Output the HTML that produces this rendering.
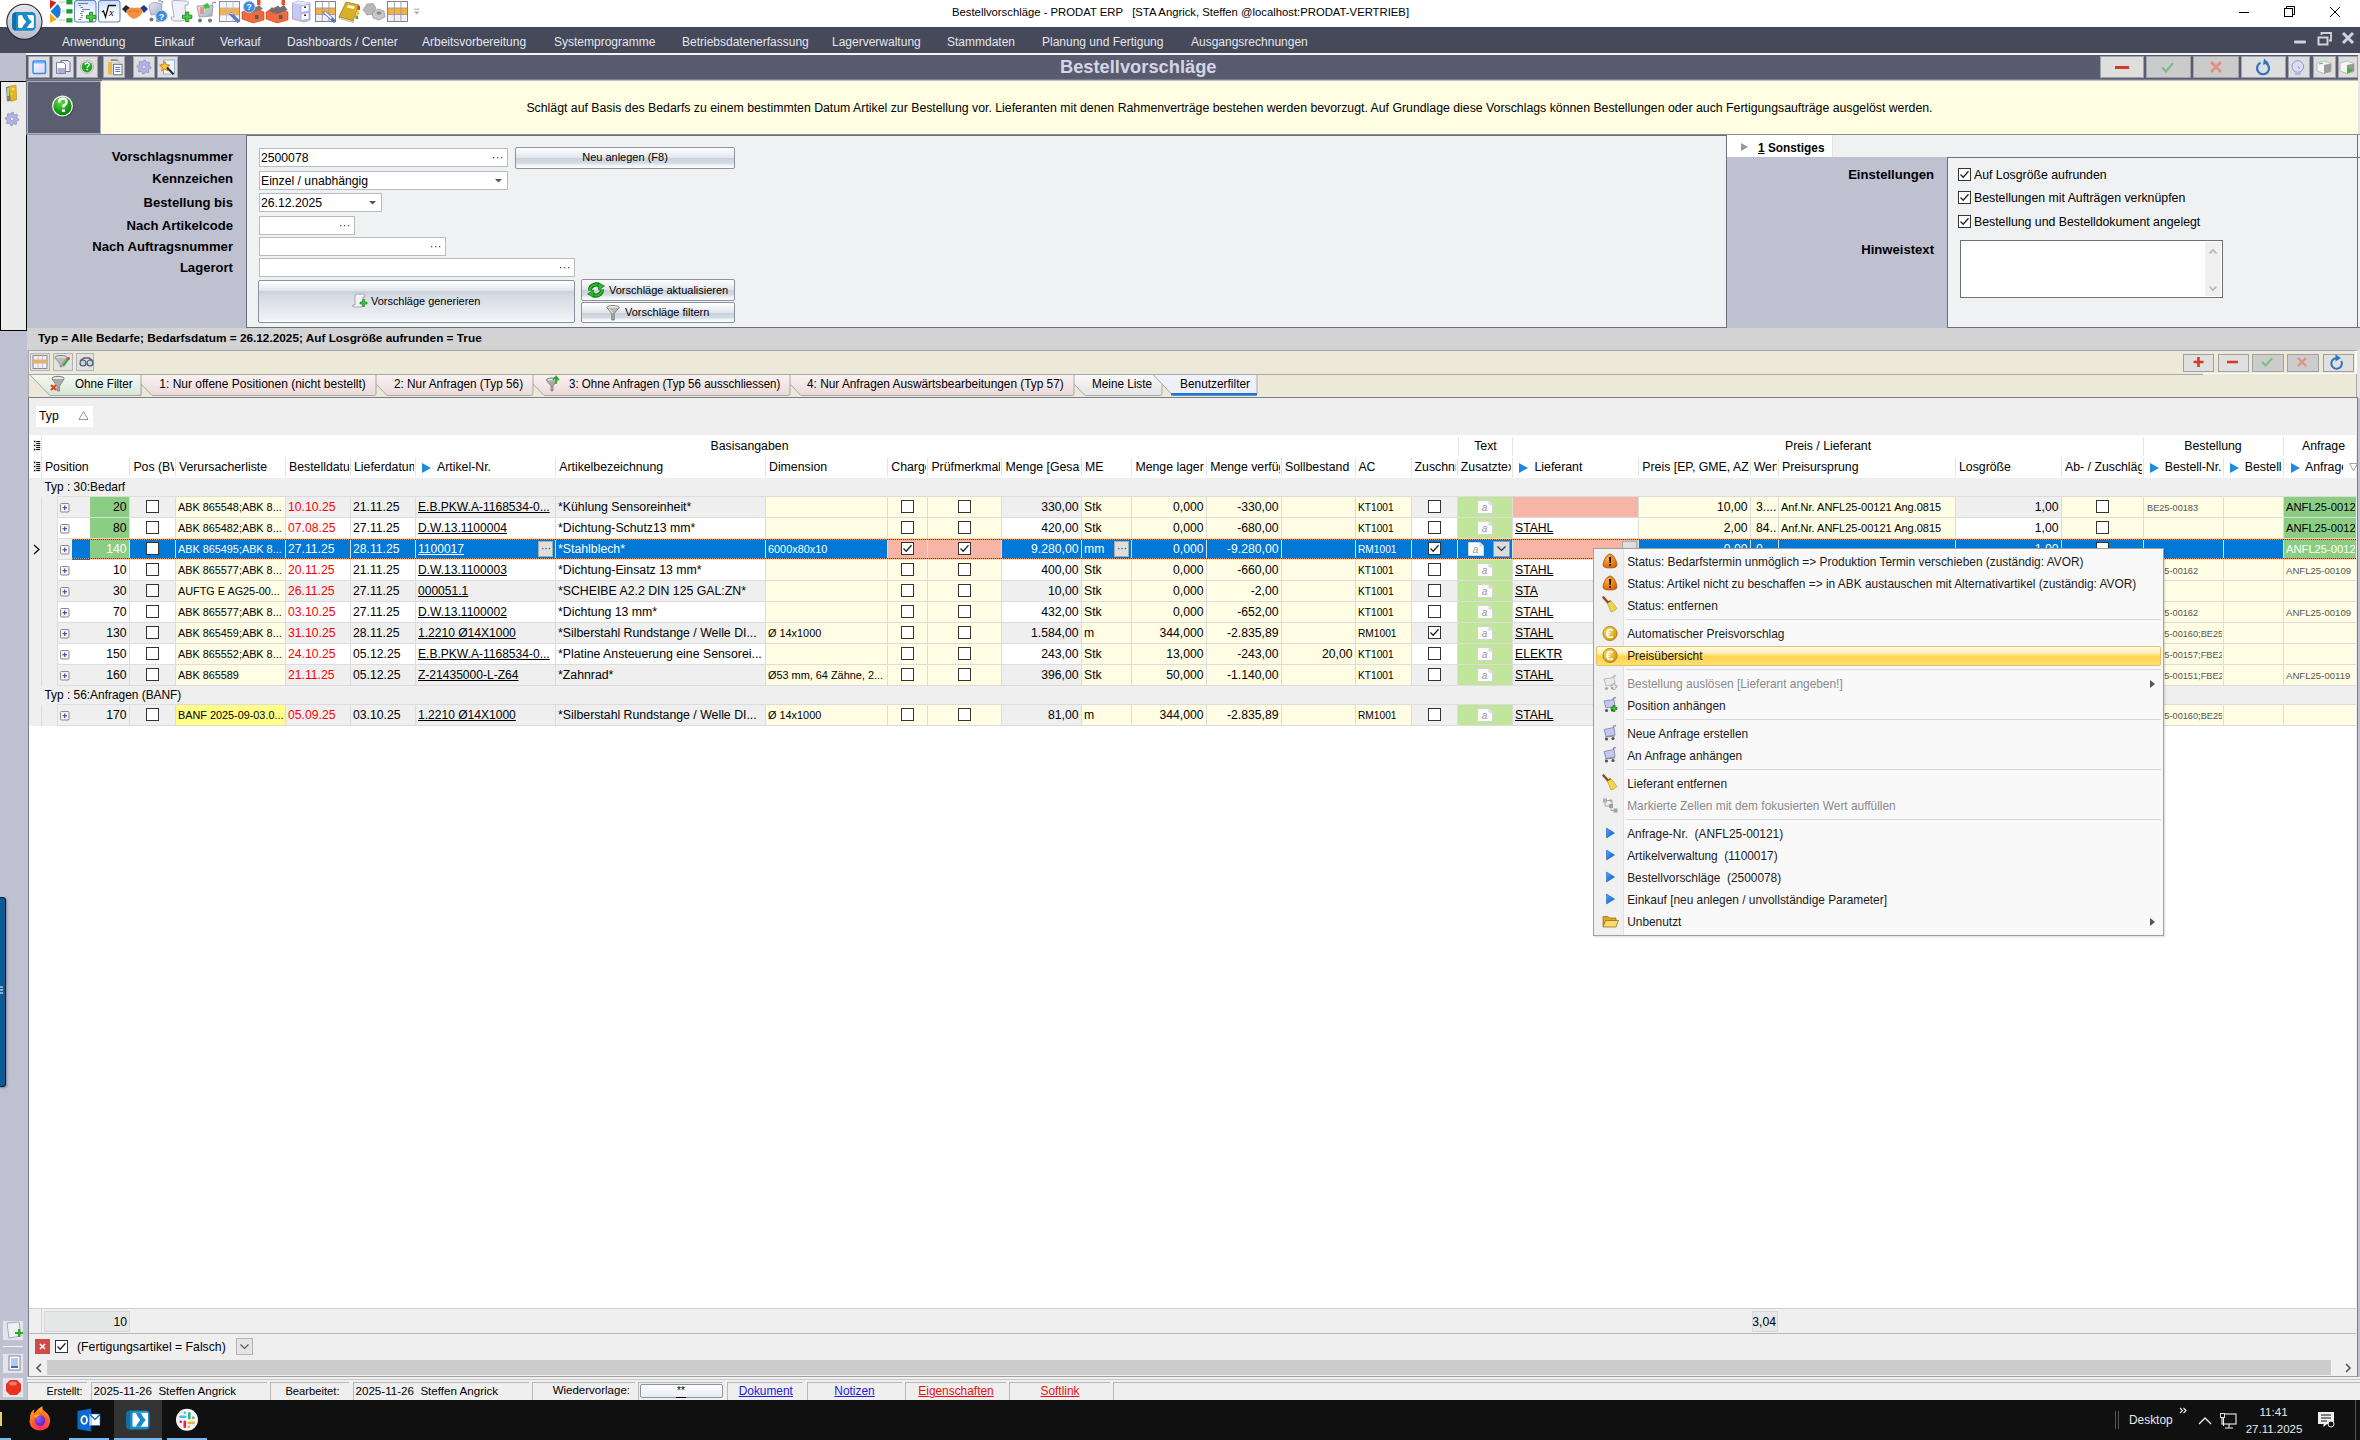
<!DOCTYPE html><html><head><meta charset="utf-8"><title>Bestellvorschläge</title><style>
*{box-sizing:border-box;margin:0;padding:0}
html,body{width:2360px;height:1440px;overflow:hidden;background:#fff;font-family:"Liberation Sans",sans-serif;font-size:12px;color:#000}
.a{position:absolute}
.t{position:absolute;white-space:nowrap;line-height:1}
.u{text-decoration:underline}
svg{position:absolute;overflow:visible}
</style></head><body>
<div class="a" style="left:0px;top:0px;width:2360px;height:27px;background:#fff"></div>
<div class="t " style="left:952.0px;top:7.2px;font-size:11.30px;">Bestellvorschläge - PRODAT ERP &nbsp;&nbsp;[STA Angrick, Steffen @localhost:PRODAT-VERTRIEB]</div>
<svg style="left:2230px;top:0" width="130" height="27"><line x1="9" y1="12.5" x2="19" y2="12.5" stroke="#000" stroke-width="1"/><rect x="54.5" y="8.5" width="8" height="8" fill="none" stroke="#000"/><path d="M56.5 8.5 V6.5 H64.5 V14.5 H62.5" fill="none" stroke="#000"/><path d="M100 7 L110 17 M110 7 L100 17" stroke="#000" stroke-width="1"/></svg>
<div class="a" style="left:0px;top:27px;width:2360px;height:26px;background:#464959"></div>
<div class="t " style="left:62.0px;top:35.8px;font-size:12.00px;color:#e4e7ee;">Anwendung</div>
<div class="t " style="left:154.0px;top:35.8px;font-size:12.00px;color:#e4e7ee;">Einkauf</div>
<div class="t " style="left:220.0px;top:35.8px;font-size:12.00px;color:#e4e7ee;">Verkauf</div>
<div class="t " style="left:287.0px;top:35.8px;font-size:12.00px;color:#e4e7ee;">Dashboards / Center</div>
<div class="t " style="left:422.0px;top:35.8px;font-size:12.00px;color:#e4e7ee;">Arbeitsvorbereitung</div>
<div class="t " style="left:554.0px;top:35.8px;font-size:12.00px;color:#e4e7ee;">Systemprogramme</div>
<div class="t " style="left:682.0px;top:35.8px;font-size:12.00px;color:#e4e7ee;">Betriebsdatenerfassung</div>
<div class="t " style="left:832.0px;top:35.8px;font-size:12.00px;color:#e4e7ee;">Lagerverwaltung</div>
<div class="t " style="left:947.0px;top:35.8px;font-size:12.00px;color:#e4e7ee;">Stammdaten</div>
<div class="t " style="left:1042.0px;top:35.8px;font-size:12.00px;color:#e4e7ee;">Planung und Fertigung</div>
<div class="t " style="left:1191.0px;top:35.8px;font-size:12.00px;color:#e4e7ee;">Ausgangsrechnungen</div>
<svg style="left:2290px;top:30px" width="70" height="22"><rect x="4" y="10.5" width="12" height="3" rx="1" fill="#d0d2dc"/><rect x="28.5" y="7.5" width="9" height="7" fill="none" stroke="#d0d2dc" stroke-width="2"/><path d="M31.5 5 V3 H41 V10.5 H39" fill="none" stroke="#d0d2dc" stroke-width="1.8"/><path d="M53 3 L63 13 M63 3 L53 13" stroke="#d0d2dc" stroke-width="3"/></svg>
<svg style="left:0;top:0" width="50" height="44"><defs><linearGradient id="lgc" x1="0" y1="0" x2="0" y2="1"><stop offset="0" stop-color="#e4e6ee"/><stop offset="1" stop-color="#b8bac8"/></linearGradient></defs><circle cx="24.4" cy="21.8" r="17.6" fill="url(#lgc)" stroke="#2a2c34" stroke-width="1.1"/><rect x="12.2" y="12" width="23.6" height="18.7" rx="4.2" fill="#1a8ac8"/><path d="M16 12.5 Q12.2 12.5 12.2 16.5 V26.5 Q12.2 30.5 16 30.5 Z" fill="#0e6ea8"/><rect x="18.1" y="14.9" width="15.8" height="13.2" rx="1.5" fill="#fff"/><path d="M21.8 14.9 L27.1 14.9 Q28.5 19 31.9 21.7 Q28.5 24.5 26.8 28.1 L21.9 28.1 Q23.5 24.5 26.3 21.7 Q23.5 19 21.8 14.9 Z" fill="#1a8ac8"/></svg>
<div class="a" style="left:0px;top:53px;width:26px;height:27px;background:#bfc0cf"></div>
<div class="a" style="left:26px;top:53px;width:2334px;height:2px;background:#f4f4f6"></div>
<div class="a" style="left:26px;top:55px;width:2334px;height:25px;background:#595c6e"></div>
<div class="a" style="left:26px;top:79px;width:2334px;height:0.6px;background:#7c7e8c"></div>
<div class="a" style="left:26px;top:79.6px;width:2334px;height:1.4px;background:#ffffff"></div>
<div class="a" style="left:28px;top:56px;width:22px;height:22px;background:#dedede;border:1px solid #9fa1ad"></div>
<div class="a" style="left:52px;top:56px;width:22px;height:22px;background:#dedede;border:1px solid #9fa1ad"></div>
<div class="a" style="left:76px;top:56px;width:22px;height:22px;background:#dedede;border:1px solid #9fa1ad"></div>
<div class="a" style="left:103px;top:56px;width:22px;height:22px;background:#dedede;border:1px solid #9fa1ad"></div>
<div class="a" style="left:133px;top:56px;width:22px;height:22px;background:#dedede;border:1px solid #9fa1ad"></div>
<div class="a" style="left:157px;top:56px;width:21px;height:22px;background:#dedede;border:1px solid #9fa1ad"></div>
<div class="t " style="left:1060.0px;top:57.5px;font-size:18.30px;color:#d4d6e6;font-weight:bold;">Bestellvorschläge</div>
<div class="a" style="left:2100px;top:56px;width:44px;height:22px;background:#dedede;border:1px solid #9fa1ad"></div>
<div class="a" style="left:2146px;top:56px;width:45px;height:22px;background:#cbcbcb;border:1px solid #9fa1ad"></div>
<div class="a" style="left:2193px;top:56px;width:46px;height:22px;background:#cbcbcb;border:1px solid #9fa1ad"></div>
<div class="a" style="left:2241px;top:56px;width:45px;height:22px;background:#dedede;border:1px solid #9fa1ad"></div>
<div class="a" style="left:2288px;top:56px;width:22px;height:22px;background:#dedede;border:1px solid #9fa1ad"></div>
<div class="a" style="left:2313px;top:56px;width:23px;height:22px;background:#dedede;border:1px solid #9fa1ad"></div>
<div class="a" style="left:2338px;top:56px;width:20px;height:22px;background:#dedede;border:1px solid #9fa1ad"></div>
<svg style="left:2100px;top:56px" width="260" height="22"><rect x="15" y="10" width="14" height="3" fill="#d83a2a"/><path d="M62 11.5 L66 15.5 L73 7" fill="none" stroke="#7fbf8a" stroke-width="2.4"/><path d="M111 6 L121 16 M121 6 L111 16" stroke="#e2907f" stroke-width="2.6"/><path d="M160.5 6.8 A6 6 0 1 0 166 7" fill="none" stroke="#2f73bf" stroke-width="2.2"/><path d="M164 2.5 L169 7.2 L163 8.8 Z" fill="#2f73bf"/><circle cx="197.8" cy="10.5" r="5.8" fill="#dcdcf6" stroke="#9090d0" stroke-width="1"/><path d="M197.8 10.5 L199.5 12" stroke="#5050a0" stroke-width="0.8"/><ellipse cx="198" cy="17.5" rx="3.5" ry="1.5" fill="#b8b8e8"/><path d="M217 7 L224 5 L231 7.5 L231 15.5 L224 17.5 L217 15 Z" fill="#f6f6f2" stroke="#aaa" stroke-width="0.7"/><path d="M224 9 L231 7.5 L231 15.5 L224 17.5 Z" fill="#9a9a9a"/><path d="M219 8 L223 7" stroke="#4ac04a" stroke-width="1"/><path d="M240 7 L247 5 L254 7.5 L254 15.5 L247 17.5 L240 15 Z" fill="#f6f6f2" stroke="#aaa" stroke-width="0.7"/><path d="M247 9 L254 7.5 L254 15.5 L247 17.5 Z" fill="#9a9a9a"/><path d="M247 11 L253 14 L247 18 Z" fill="#3cb83c"/></svg>
<svg style="left:28px;top:56px" width="152" height="22"><defs><linearGradient id="wg" x1="0" y1="0" x2="1" y2="1"><stop offset="0" stop-color="#ffffff"/><stop offset="1" stop-color="#d8ccf4"/></linearGradient></defs><rect x="5" y="5" width="12.5" height="12.5" rx="1.2" fill="url(#wg)" stroke="#2a90ff" stroke-width="1.5"/><path d="M5.5 6.8 H17" stroke="#2a90ff" stroke-width="0.9"/><path d="M33 4.5 H40 L42 6.5 V15.5 H33 Z" fill="#f0eef8" stroke="#7050b0" stroke-width="0.9"/><path d="M28.5 6.5 H35.5 L37.5 8.5 V17.5 H28.5 Z" fill="#fff" stroke="#6878a0" stroke-width="0.9"/><rect x="29.5" y="12" width="7.5" height="5" fill="#a8b4d0"/><circle cx="59" cy="11" r="6.6" fill="#ece4f0" stroke="#a890b0" stroke-width="0.6"/><circle cx="59" cy="11" r="5.4" fill="#1ea81e"/><path d="M57 8.8 Q57 7 59 7 Q61.2 7 61.2 8.8 Q61.2 10 59.3 10.8 V11.8" fill="none" stroke="#fff" stroke-width="1.4"/><rect x="58.4" y="12.8" width="1.8" height="1.4" fill="#fff"/><rect x="80" y="6" width="4" height="12.5" fill="#f0b848"/><path d="M82.6 4.2 H89.9" stroke="#888" stroke-width="1.6"/><rect x="84.5" y="3" width="3.5" height="1.8" fill="#999"/><rect x="90.5" y="5" width="1" height="2" fill="#f0b848"/><rect x="85.5" y="8.3" width="8.5" height="10.5" fill="#fff" stroke="#707070" stroke-width="1"/><path d="M87.3 11.5 H92.2 M87.3 13.5 H92.2 M87.3 15.5 H92.2" stroke="#3a70c0" stroke-width="0.9"/><polygon points="123.00,11.00 122.87,12.37 120.90,13.03 120.41,13.94 120.95,15.95 119.89,16.82 118.03,15.90 117.03,16.20 116.00,18.00 114.63,17.87 113.97,15.90 113.06,15.41 111.05,15.95 110.18,14.89 111.10,13.03 110.80,12.03 109.00,11.00 109.13,9.63 111.10,8.97 111.59,8.06 111.05,6.05 112.11,5.18 113.97,6.10 114.97,5.80 116.00,4.00 117.37,4.13 118.03,6.10 118.94,6.59 120.95,6.05 121.82,7.11 120.90,8.97 121.20,9.97" fill="#b4b4e4" stroke="#7a7ab8" stroke-width="0.6"/><circle cx="116" cy="11" r="2" fill="#dcdcf0" stroke="#7a7ab8" stroke-width="0.5"/><rect x="135.5" y="4" width="11" height="14" fill="#f4f8ff" stroke="#90a8d8" stroke-width="0.9"/><path d="M136.8 5.5 L138.4 8.6 L141.8 9.1 L139.3 11.4 L139.9 14.8 L136.8 13.2 L133.7 14.8 L134.3 11.4 L131.8 9.1 L135.2 8.6 Z" fill="#f8c830" stroke="#d06010" stroke-width="0.8"/><path d="M139 11.5 L145.5 18.3" stroke="#2a2a2a" stroke-width="2"/></svg>
<svg style="left:40px;top:0" width="390" height="27"><defs><linearGradient id="qf" x1="0" y1="0" x2="0" y2="1"><stop offset="0" stop-color="#c8dcfa"/><stop offset="0.5" stop-color="#f4f8ff"/><stop offset="1" stop-color="#ffffff"/></linearGradient><linearGradient id="qc" x1="0" y1="0" x2="1" y2="1"><stop offset="0" stop-color="#e8e8f8"/><stop offset="1" stop-color="#a8a8c8"/></linearGradient></defs><path d="M10 0 L16.4 2.4 L10 9.2 Z" fill="#d42020"/><path d="M10.5 11.5 L17.5 4 Q21.5 8 20.5 11.5 Q21 15 17.5 18.5 Z" fill="#1a78d8"/><path d="M10 13.3 L16.6 19.5 L10 22.9 Z" fill="#f8a818"/><rect x="26.3" y="0" width="6.2" height="4.4" fill="#14a02e"/><rect x="26.3" y="9.2" width="6.2" height="4.3" fill="#14a02e"/><rect x="26.3" y="18.2" width="6.2" height="4.3" fill="#14a02e"/><path d="M19 2.2 H25 M22 11.2 H25 M19 20.2 H25" stroke="#c8c8c8" stroke-width="1.2"/><rect x="34.5" y="0.5" width="21.5" height="21.5" rx="2.5" fill="url(#qf)" stroke="#6a88c4" stroke-width="1.1"/><path d="M38 3.5 H48 M39 5.5 H41 M40.5 7.5 H43 M42 9.5 H50 M41 11.5 H44 M40 13.5 H42.5 M41 15.5 H43 M40.5 17.5 H42.5 M38.5 19.5 H41.5" stroke="#6a7088" stroke-width="0.9"/><polygon points="49.5,12.3 52.7,12.3 52.7,15.4 55.8,15.4 55.8,18.6 52.7,18.6 52.7,21.7 49.5,21.7 49.5,18.6 46.4,18.6 46.4,15.4 49.5,15.4" fill="#44cc44" stroke="#127a12" stroke-width="0.8"/><rect x="58.5" y="0.5" width="21.5" height="21.5" rx="2.5" fill="url(#qf)" stroke="#6a88c4" stroke-width="1.1"/><path d="M62 12 L63.5 11 L65.5 17 L68.5 5.5 H76" fill="none" stroke="#111" stroke-width="1.3"/><text x="71.5" y="16" font-size="11" font-family="Liberation Serif" font-style="italic" text-anchor="middle" fill="#111">x</text><path d="M82 9 L86 5 L90 8 L86 13 Z" fill="#282828"/><path d="M104 5 L108 9 L104 13 L100 8 Z" fill="#1c3c9c"/><path d="M86 11 Q90 6 95 8 Q100 6 103 11 Q101 17 94 19 Q88 17 86 11 Z" fill="#f49040"/><path d="M89 12 Q94 9 99 12" fill="none" stroke="#d06a20" stroke-width="0.8"/><path d="M109 6 Q112 1 118 3 L122 4 L121 14 L111 15 Z" fill="url(#qc)" stroke="#8a8aa8" stroke-width="0.7"/><path d="M118 1 Q122 0 123 3" fill="none" stroke="#888" stroke-width="1.2"/><circle cx="111.5" cy="19.5" r="2" fill="#777"/><circle cx="118" cy="20" r="2" fill="#777"/><circle cx="121.5" cy="16" r="5.8" fill="#3a8ae8" stroke="#d0d0d0" stroke-width="1"/><text x="121.5" y="19.5" font-size="9" fill="#fff" text-anchor="middle" font-family="Liberation Sans" font-weight="bold">?</text><path d="M132 3 Q131 0 135 0.5 L146 1 Q150 2 148 5 L145 5 L146 18 Q145 21 141 21 L134 21 Q130 20 131 17 L134 17 Z" fill="#eef0fa" stroke="#9a9ab4" stroke-width="0.8"/><polygon points="145.6,12.1 148.8,12.1 148.8,15.2 151.9,15.2 151.9,18.4 148.8,18.4 148.8,21.5 145.6,21.5 145.6,18.4 142.5,18.4 142.5,15.2 145.6,15.2" fill="#44cc44" stroke="#127a12" stroke-width="0.8"/><path d="M157 6 L173 5 L172 16 L159 17 Z" fill="url(#qc)" stroke="#8a8aa8" stroke-width="0.7"/><rect x="160" y="7" width="4" height="7" fill="#f08a6a" opacity="0.8"/><path d="M163 5 L168 3 L170 8 L165 9 Z" fill="#40c050"/><rect x="166" y="8" width="4" height="6" fill="#a0d8a0" opacity="0.8"/><path d="M172 4 Q174 1 176 3" fill="none" stroke="#888" stroke-width="1.2"/><circle cx="160" cy="20.5" r="2" fill="#777"/><circle cx="170" cy="20.5" r="2" fill="#777"/><rect x="179.5" y="1.5" width="20" height="20" fill="#f4f4fc" stroke="#8a8a9a"/><rect x="180" y="8" width="19" height="7" fill="#f8b040"/><path d="M186.5 1.5 V21.5 M193 1.5 V21.5 M180 8 H199 M180 15 H199" stroke="#b8b8c8" stroke-width="0.8"/><path d="M190 13 L199 22" stroke="#5a7ac8" stroke-width="3.2"/><path d="M190 13 L193 14" stroke="#e8e8f8" stroke-width="1"/><path d="M202 12 L212 7 L224 12 L224 20 L213 23 L202 19 Z" fill="#f06a40" stroke="#b84420" stroke-width="0.6"/><path d="M206 9 L209 6.5 L211 8 L214 5.5 L216 7 L219 5 L223 9 L212 13 Z" fill="#7a7a7a"/><rect x="217" y="0" width="3.5" height="5" fill="#e85030"/><rect x="215" y="15" width="3.5" height="4" fill="#505a60"/><circle cx="209.2" cy="6.9" r="5.8" fill="#3a8ae8" stroke="#c8c8d0" stroke-width="1"/><text x="209.2" y="10.2" font-size="8.5" fill="#fff" text-anchor="middle" font-family="Liberation Sans" font-weight="bold">?</text><path d="M226 12 L236 7 L248 12 L248 20 L237 23 L226 19 Z" fill="#f06a40" stroke="#b84420" stroke-width="0.6"/><path d="M228 11 L232 7 L234 9 L238 5.5 L240 7.5 L244 5 L247.5 10 L237 14 Z" fill="#6e6e6e"/><rect x="241.5" y="0" width="3.5" height="5" fill="#e85030"/><rect x="239" y="15" width="3.5" height="4" fill="#505a60"/><path d="M252.5 3 L258 1 L270 3 L270 20 L264 22 L252.5 19 Z" fill="#c8c8f0" stroke="#8888c0" stroke-width="0.6"/><path d="M252.5 3 L258 1 L270 3 L264 5 Z" fill="#e8e8fc"/><path d="M261 6 L269 4.5 L269 11 L261 12.5 Z" fill="#fafaff" stroke="#8888c0" stroke-width="0.5"/><path d="M261 14 L269 12.5 L269 19 L261 20.5 Z" fill="#fafaff" stroke="#8888c0" stroke-width="0.5"/><rect x="264" y="6.5" width="2" height="1.5" fill="#333"/><rect x="264" y="14.5" width="2" height="1.5" fill="#333"/><rect x="275.5" y="1.5" width="20" height="20" fill="#fff" stroke="#777" stroke-width="0.9"/><rect x="276" y="8" width="19" height="6.5" fill="#f8b040"/><rect x="276" y="14.5" width="19" height="6.5" fill="#eeeefc"/><path d="M282.3 1.5 V21.5 M288.9 1.5 V21.5 M276 8 H295 M276 14.5 H295" stroke="#999" stroke-width="0.9"/><path d="M285 12.5 L294 21" stroke="#5a70c0" stroke-width="3.4" stroke-linecap="round"/><path d="M285 12.5 L291 18" stroke="#f0f0f8" stroke-width="1.8" stroke-linecap="round"/><path d="M299 17 L306 2 L319 5 L313 21 Z" fill="#d8b028" stroke="#907010" stroke-width="0.7"/><path d="M299 17 L313 21 L313.5 22.5 L299.5 18.5 Z" fill="#f8f8f0" stroke="#907010" stroke-width="0.5"/><path d="M308 5 L315 6.5 L314 9 L307 7.5 Z" fill="#fff8d0"/><rect x="317.5" y="6" width="2.5" height="4" fill="#e04030"/><rect x="316.5" y="11" width="2.5" height="4" fill="#e8d030"/><rect x="315.5" y="15.5" width="2.5" height="3.5" fill="#40b040"/><path d="M323 10 L327 4 L333 3.5 L336 8 L333 14 L327 15 Z" fill="#b8b8b8" stroke="#888" stroke-width="0.6"/><path d="M332 13 L338 9 L344 11 L345 17 L339 20 L333 18 Z" fill="#c8c8c8" stroke="#888" stroke-width="0.6"/><ellipse cx="339" cy="13" rx="2.5" ry="1.5" fill="#888"/><rect x="347.5" y="1.5" width="20" height="20" fill="#fff" stroke="#777" stroke-width="0.9"/><rect x="348" y="8" width="19" height="6.5" fill="#f8b040"/><rect x="348" y="14.5" width="19" height="6.5" fill="#eeeefc"/><path d="M354.3 1.5 V21.5 M360.9 1.5 V21.5 M348 8 H367 M348 14.5 H367" stroke="#999" stroke-width="0.9"/><path d="M374 9.2 H379.5" stroke="#a8a8b8" stroke-width="1"/><path d="M374 11.5 L379.5 11.5 L376.75 14.5 Z" fill="#a8a8b8"/></svg>
<div class="a" style="left:0px;top:80px;width:2360px;height:1320px;background:#bfc0d0"></div>
<div class="a" style="left:0px;top:81px;width:27px;height:250px;background:#ececec;border:1.5px solid #000"></div>
<svg style="left:0;top:81px" width="27" height="50"><path d="M6 6 L16 4.5 L16.5 19 L7 20.5 Z" fill="#808080"/><path d="M8.5 5.5 L16 4 L16.5 18.5 L11 20.5 Z" fill="#e8b420" stroke="#b88a10" stroke-width="0.5"/><rect x="7.3" y="7" width="1.6" height="8" fill="#a8e890"/><rect x="12" y="7.5" width="2.5" height="1" fill="#fff"/><circle cx="11.8" cy="13" r="0.6" fill="#fff"/><polygon points="18.80,38.00 18.67,39.33 16.62,39.91 16.16,40.78 16.81,42.81 15.78,43.65 13.91,42.62 12.98,42.90 12.00,44.80 10.67,44.67 10.09,42.62 9.22,42.16 7.19,42.81 6.35,41.78 7.38,39.91 7.10,38.98 5.20,38.00 5.33,36.67 7.38,36.09 7.84,35.22 7.19,33.19 8.22,32.35 10.09,33.38 11.02,33.10 12.00,31.20 13.33,31.33 13.91,33.38 14.78,33.84 16.81,33.19 17.65,34.22 16.62,36.09 16.90,37.02" fill="#b4b4e4" stroke="#7a7ab8" stroke-width="0.6"/><circle cx="12" cy="38" r="1.8" fill="#ececec" stroke="#7a7ab8" stroke-width="0.5"/></svg>
<div class="a" style="left:27px;top:81px;width:74px;height:53px;background:#5b5e70;border:1px solid #aeb0bc;outline:1px solid #6b6e80"></div>
<svg style="left:27px;top:81px" width="74" height="53"><defs><radialGradient id="hg" cx="0.4" cy="0.3" r="0.8"><stop offset="0" stop-color="#6ad84a"/><stop offset="0.6" stop-color="#18a018"/><stop offset="1" stop-color="#0a700a"/></radialGradient></defs><circle cx="36.5" cy="26" r="10.5" fill="#2a2c36" opacity="0.5"/><circle cx="35.5" cy="25" r="10.5" fill="#f4f4f4"/><circle cx="35.5" cy="25" r="9.2" fill="url(#hg)"/><path d="M32 21.5 Q32 17.5 35.7 17.5 Q39.5 17.5 39.5 21 Q39.5 23.3 36.5 24.5 V26.5" fill="none" stroke="#fff" stroke-width="2.4"/><rect x="35" y="28.3" width="3" height="2.6" fill="#fff"/></svg>
<div class="a" style="left:101px;top:81px;width:2258px;height:53px;background:#fffee3"></div>
<div class="t " style="left:526.4px;top:101.6px;font-size:12.30px;">Schlägt auf Basis des Bedarfs zu einem bestimmten Datum Artikel zur Bestellung vor. Lieferanten mit denen Rahmenverträge bestehen werden bevorzugt. Auf Grundlage diese Vorschlags können Bestellungen oder auch Fertigungsaufträge ausgelöst werden.</div>
<div class="a" style="left:2358px;top:53px;width:2px;height:1347px;background:#e6e6e6"></div>
<div class="a" style="left:27px;top:134px;width:2333px;height:194px;background:#bfc0d0"></div>
<div class="a" style="left:27px;top:134px;width:2333px;height:1px;background:#8a8c98"></div>
<div class="a" style="left:246px;top:135px;width:1481px;height:193px;background:#f0f1f3;border-left:1px solid #6c6e78;border-top:1px solid #6c6e78"></div>
<div class="t" style="right:2127.0px;top:149.9px;font-size:13.10px;color:#000;font-weight:bold;">Vorschlagsnummer</div>
<div class="t" style="right:2127.0px;top:171.9px;font-size:13.10px;color:#000;font-weight:bold;">Kennzeichen</div>
<div class="t" style="right:2127.0px;top:195.9px;font-size:13.10px;color:#000;font-weight:bold;">Bestellung bis</div>
<div class="t" style="right:2127.0px;top:218.9px;font-size:13.10px;color:#000;font-weight:bold;">Nach Artikelcode</div>
<div class="t" style="right:2127.0px;top:239.9px;font-size:13.10px;color:#000;font-weight:bold;">Nach Auftragsnummer</div>
<div class="t" style="right:2127.0px;top:260.9px;font-size:13.10px;color:#000;font-weight:bold;">Lagerort</div>
<div class="a" style="left:259px;top:148px;width:249px;height:19px;background:#fff;border:1px solid #b9bbc2"></div>
<div class="t " style="left:261.0px;top:151.7px;font-size:12.20px;">2500078</div>
<svg style="left:493px;top:157px" width="12" height="4"><rect x="0" y="0" width="1.3" height="1.3" fill="#555"/><rect x="4" y="0" width="1.3" height="1.3" fill="#555"/><rect x="8" y="0" width="1.3" height="1.3" fill="#555"/></svg>
<div class="a" style="left:259px;top:171px;width:249px;height:19px;background:#fff;border:1px solid #b9bbc2"></div>
<div class="t " style="left:261.0px;top:174.7px;font-size:12.20px;">Einzel / unabhängig</div>
<svg style="left:495px;top:179px" width="8" height="5"><path d="M0 0 H7 L3.5 3.5 Z" fill="#555"/></svg>
<div class="a" style="left:259px;top:193px;width:123px;height:19px;background:#fff;border:1px solid #b9bbc2"></div>
<div class="t " style="left:261.0px;top:196.7px;font-size:12.20px;">26.12.2025</div>
<svg style="left:369px;top:201px" width="8" height="5"><path d="M0 0 H7 L3.5 3.5 Z" fill="#555"/></svg>
<div class="a" style="left:259px;top:216px;width:96px;height:19px;background:#fff;border:1px solid #b9bbc2"></div>
<svg style="left:340px;top:225px" width="12" height="4"><rect x="0" y="0" width="1.3" height="1.3" fill="#555"/><rect x="4" y="0" width="1.3" height="1.3" fill="#555"/><rect x="8" y="0" width="1.3" height="1.3" fill="#555"/></svg>
<div class="a" style="left:259px;top:237px;width:187px;height:19px;background:#fff;border:1px solid #b9bbc2"></div>
<svg style="left:431px;top:246px" width="12" height="4"><rect x="0" y="0" width="1.3" height="1.3" fill="#555"/><rect x="4" y="0" width="1.3" height="1.3" fill="#555"/><rect x="8" y="0" width="1.3" height="1.3" fill="#555"/></svg>
<div class="a" style="left:259px;top:258px;width:316px;height:19px;background:#fff;border:1px solid #b9bbc2"></div>
<svg style="left:560px;top:267px" width="12" height="4"><rect x="0" y="0" width="1.3" height="1.3" fill="#555"/><rect x="4" y="0" width="1.3" height="1.3" fill="#555"/><rect x="8" y="0" width="1.3" height="1.3" fill="#555"/></svg>
<div class="a" style="left:515px;top:147px;width:220px;height:22px;border:1px solid #8a929e;border-radius:2px;background:linear-gradient(#fefefe 0px,#f0f2f6 5px,#e2e6ec 9.5px,#c9d1db 10.5px,#d6dce4 15px,#eef1f4 calc(100% - 3px),#ffffff 100%)"></div>
<div class="t" style="left:625.0px;top:151.7px;width:0;font-size:11.00px;display:flex;justify-content:center;"><span>Neu anlegen (F8)</span></div>
<div class="a" style="left:258px;top:280px;width:317px;height:43px;border:1px solid #8a929e;border-radius:2px;background:linear-gradient(#fefefe 0px,#f0f2f6 5px,#e2e6ec 9.5px,#c9d1db 10.5px,#d6dce4 15px,#eef1f4 calc(100% - 3px),#ffffff 100%)"></div>
<div class="t " style="left:371.0px;top:295.7px;font-size:10.95px;">Vorschläge generieren</div>
<svg style="left:351px;top:293px" width="18" height="18"><path d="M4 3 Q4 1 6 1 L12 1 Q14 1 14 3 L14 4 L12 4 L12 12 Q12 14 10 14 L3 14 Q1 14 1.5 12 L4 12 Z" fill="#f0f2f8" stroke="#8a8aa0" stroke-width="0.7"/><path d="M9 9 H11.5 V6.5 H13.5 V9 H16 V11 H13.5 V13.5 H11.5 V11 H9 Z" fill="#3cc83c" stroke="#127a12" stroke-width="0.6"/></svg>
<div class="a" style="left:581px;top:279px;width:154px;height:22px;border:1px solid #8a929e;border-radius:2px;background:linear-gradient(#fefefe 0px,#f0f2f6 5px,#e2e6ec 9.5px,#c9d1db 10.5px,#d6dce4 15px,#eef1f4 calc(100% - 3px),#ffffff 100%)"></div>
<div class="t " style="left:609.0px;top:284.7px;font-size:11.00px;">Vorschläge aktualisieren</div>
<svg style="left:587px;top:281px" width="18" height="18"><path d="M3 9.5 A6 6 0 0 1 13.5 5.5" fill="none" stroke="#0a5a1a" stroke-width="4"/><path d="M15 8.5 A6 6 0 0 1 4.5 12.5" fill="none" stroke="#0a5a1a" stroke-width="4"/><path d="M3 9.5 A6 6 0 0 1 13.5 5.5" fill="none" stroke="#22c022" stroke-width="2.4"/><path d="M15 8.5 A6 6 0 0 1 4.5 12.5" fill="none" stroke="#22c022" stroke-width="2.4"/><path d="M11 1.5 L17.5 5 L11.5 9 Z" fill="#22c022" stroke="#0a5a1a" stroke-width="0.6"/><path d="M7 16.5 L0.5 13 L6.5 9 Z" fill="#22c022" stroke="#0a5a1a" stroke-width="0.6"/></svg>
<div class="a" style="left:581px;top:302px;width:154px;height:21px;border:1px solid #8a929e;border-radius:2px;background:linear-gradient(#fefefe 0px,#f0f2f6 5px,#e2e6ec 9.5px,#c9d1db 10.5px,#d6dce4 15px,#eef1f4 calc(100% - 3px),#ffffff 100%)"></div>
<div class="t " style="left:625.0px;top:306.7px;font-size:11.00px;">Vorschläge filtern</div>
<svg style="left:605px;top:304px" width="18" height="18"><ellipse cx="8" cy="3.5" rx="6" ry="2" fill="#f0f0f0" stroke="#666" stroke-width="0.8"/><path d="M2 3.8 L6.8 9.5 V16 L9.2 16 V9.5 L14 3.8" fill="#b8b8b8" stroke="#555" stroke-width="0.7"/><path d="M4 5 L7.5 9" stroke="#fff" stroke-width="0.8"/></svg>
<div class="a" style="left:1726px;top:135px;width:634px;height:193px;background:#f0f1f3;border-left:1px solid #6c6e78"></div>
<div class="a" style="left:1727px;top:135px;width:106px;height:22px;background:#ffffff;border-right:1px solid #e4e4e4"></div>
<svg style="left:1741px;top:143px" width="8" height="9"><path d="M0 0 L7 4 L0 8 Z" fill="#999"/></svg>
<div class="t " style="left:1758.0px;top:142.5px;font-size:11.85px;color:#000;font-weight:bold;"><span class="u">1</span> Sonstiges</div>
<div class="a" style="left:1727px;top:157px;width:1633px;height:171px;background:#bfc0d0"></div>
<div class="a" style="left:1947px;top:157px;width:413px;height:171px;background:#f0f1f3;border-left:1px solid #6c6e78;border-top:1px solid #6c6e78"></div>
<div class="t" style="right:426.0px;top:167.9px;font-size:13.10px;color:#000;font-weight:bold;">Einstellungen</div>
<div class="t" style="right:426.0px;top:242.9px;font-size:13.10px;color:#000;font-weight:bold;">Hinweistext</div>
<div class="a" style="left:1958px;top:168px;width:13px;height:13px;background:#fff;border:1.3px solid #333"></div>
<svg style="left:1958px;top:168px" width="13" height="13"><path d="M2.5 6.5 L5.2 9.2 L10.5 3.3" fill="none" stroke="#222" stroke-width="1.3"/></svg>
<div class="t " style="left:1974.0px;top:168.6px;font-size:12.30px;">Auf Losgröße aufrunden</div>
<div class="a" style="left:1958px;top:191px;width:13px;height:13px;background:#fff;border:1.3px solid #333"></div>
<svg style="left:1958px;top:191px" width="13" height="13"><path d="M2.5 6.5 L5.2 9.2 L10.5 3.3" fill="none" stroke="#222" stroke-width="1.3"/></svg>
<div class="t " style="left:1974.0px;top:191.6px;font-size:12.30px;">Bestellungen mit Aufträgen verknüpfen</div>
<div class="a" style="left:1958px;top:215px;width:13px;height:13px;background:#fff;border:1.3px solid #333"></div>
<svg style="left:1958px;top:215px" width="13" height="13"><path d="M2.5 6.5 L5.2 9.2 L10.5 3.3" fill="none" stroke="#222" stroke-width="1.3"/></svg>
<div class="t " style="left:1974.0px;top:215.6px;font-size:12.30px;">Bestellung und Bestelldokument angelegt</div>
<div class="a" style="left:1960px;top:240px;width:263px;height:58px;background:#fff;border:1px solid #707070"></div>
<div class="a" style="left:2205px;top:242px;width:16px;height:54px;background:#f0f0f0"></div>
<svg style="left:2205px;top:242px" width="16" height="54"><path d="M4.5 11.5 L8 8 L11.5 11.5" fill="none" stroke="#b4b4b4" stroke-width="1.6"/><path d="M4.5 44.5 L8 48 L11.5 44.5" fill="none" stroke="#b4b4b4" stroke-width="1.6"/></svg>
<div class="a" style="left:246px;top:326.5px;width:1481px;height:1.5px;background:#6c6e78"></div>
<div class="a" style="left:1947px;top:326.5px;width:1411px;height:1.5px;background:#6c6e78"></div>
<div class="a" style="left:2356.5px;top:135px;width:1.5px;height:193px;background:#6c6e78"></div>
<div class="a" style="left:27px;top:328px;width:2333px;height:22px;background:#d3d3d3"></div>
<div class="t " style="left:38.0px;top:333.2px;font-size:11.80px;color:#000;font-weight:bold;">Typ = Alle Bedarfe; Bedarfsdatum = 26.12.2025; Auf Losgröße aufrunden = True</div>
<div class="a" style="left:27px;top:350px;width:2333px;height:1050px;background:#bfc0d0"></div>
<div class="a" style="left:28px;top:350px;width:2329px;height:48px;background:#ece9d8;border-left:1px solid #a8a8a8;border-top:1px solid #a8a8a8;border-right:1px solid #a8a8a8"></div>
<div class="a" style="left:2357px;top:350px;width:3px;height:48px;background:#e4e4e4"></div>
<div class="a" style="left:28px;top:373.5px;width:2175px;height:1.2px;background:#a8a8a8"></div>
<div class="a" style="left:2203px;top:372.5px;width:153px;height:1.5px;background:#fff"></div>
<div class="a" style="left:2355px;top:351px;width:1.5px;height:23px;background:#fff"></div>
<div class="a" style="left:30px;top:353px;width:20px;height:18px;background:#e2e2e2;border:1px solid #b4b4b4"></div>
<div class="a" style="left:53px;top:353px;width:20px;height:18px;background:#e2e2e2;border:1px solid #b4b4b4"></div>
<div class="a" style="left:76px;top:353px;width:18px;height:18px;background:#e2e2e2;border:1px solid #b4b4b4"></div>
<svg style="left:30px;top:353px" width="70" height="18"><rect x="3" y="2.5" width="14" height="13" fill="#eeeefa" stroke="#889"/><rect x="3.5" y="6.5" width="13" height="4" fill="#f8b040"/><path d="M8 2.5 V15.5 M12.5 2.5 V15.5" stroke="#bbc" stroke-width="0.8"/><ellipse cx="31" cy="4.5" rx="6" ry="2" fill="#ddd" stroke="#666" stroke-width="0.8"/><path d="M25 5 L30 11 V14 L32 14 V11 L37 5" fill="#bbb" stroke="#777" stroke-width="0.6"/><path d="M33 13 L38 6" stroke="#3aa83a" stroke-width="2.2"/><circle cx="38.5" cy="5.5" r="1.4" fill="#e04040"/><circle cx="53" cy="10" r="3" fill="#b8d8f0" stroke="#555" stroke-width="1.2"/><circle cx="60" cy="10" r="3" fill="#b8d8f0" stroke="#555" stroke-width="1.2"/><path d="M50 8 L54 5 L59 5 L63 8" fill="none" stroke="#666" stroke-width="1.6"/></svg>
<div class="a" style="left:2183px;top:353.5px;width:31px;height:18px;background:#e0e0e0;border:1px solid #a0a0a0"></div>
<div class="a" style="left:2218px;top:353.5px;width:31px;height:18px;background:#e0e0e0;border:1px solid #a0a0a0"></div>
<div class="a" style="left:2252px;top:353.5px;width:32px;height:18px;background:#cccccc;border:1px solid #a0a0a0"></div>
<div class="a" style="left:2287px;top:353.5px;width:32px;height:18px;background:#cccccc;border:1px solid #a0a0a0"></div>
<div class="a" style="left:2323px;top:353.5px;width:31px;height:18px;background:#e0e0e0;border:1px solid #a0a0a0"></div>
<svg style="left:2183px;top:353px" width="175" height="18"><path d="M15.5 4 V14 M10.5 9 H20.5" stroke="#d83a2a" stroke-width="2.6"/><path d="M44 9 H55" stroke="#d83a2a" stroke-width="2.6"/><path d="M79 9 L82.5 12.5 L89 5.5" fill="none" stroke="#7fbf8a" stroke-width="2.2"/><path d="M115 5 L123 13 M123 5 L115 13" stroke="#e2907f" stroke-width="2.2"/><path d="M153 5.2 A5.3 5.3 0 1 0 158.3 8" fill="none" stroke="#2f73bf" stroke-width="2"/><path d="M152.5 1.5 L158 5 L152.5 8.5 Z" fill="#2f73bf"/></svg>
<svg style="left:30px;top:374px" width="112" height="23"><path d="M0.5 0.5 L111 0.5 L111 21.5 L21 21.5 Z" fill="url(#g)" stroke="#a4a4a4" stroke-width="1"/></svg>
<div class="t " style="left:75.0px;top:378.8px;font-size:12.00px;">Ohne Filter</div>
<svg style="left:0;top:0" width="1300" height="400"><linearGradient id="tg5" x1="0" y1="0" x2="0" y2="1"><stop offset="0" stop-color="#fafafa"/><stop offset="1" stop-color="#e4e4e4"/></linearGradient><path d="M1065.0 374.5 L1162.0 374.5 L1162.0 393.5 Q1162.0 395.5 1160.0 395.5 L1085.0 395.5 Z" fill="url(#tg5)" stroke="#a8a8a8" stroke-width="1"/><linearGradient id="tg4" x1="0" y1="0" x2="0" y2="1"><stop offset="0" stop-color="#faf2f2"/><stop offset="1" stop-color="#ecd9d9"/></linearGradient><path d="M781.0 374.5 L1074.0 374.5 L1074.0 393.5 Q1074.0 395.5 1072.0 395.5 L801.0 395.5 Z" fill="url(#tg4)" stroke="#a8a8a8" stroke-width="1"/><linearGradient id="tg3" x1="0" y1="0" x2="0" y2="1"><stop offset="0" stop-color="#faf2f2"/><stop offset="1" stop-color="#ecd9d9"/></linearGradient><path d="M524.0 374.5 L790.0 374.5 L790.0 393.5 Q790.0 395.5 788.0 395.5 L544.0 395.5 Z" fill="url(#tg3)" stroke="#a8a8a8" stroke-width="1"/><linearGradient id="tg2" x1="0" y1="0" x2="0" y2="1"><stop offset="0" stop-color="#faf2f2"/><stop offset="1" stop-color="#ecd9d9"/></linearGradient><path d="M367.0 374.5 L533.0 374.5 L533.0 393.5 Q533.0 395.5 531.0 395.5 L387.0 395.5 Z" fill="url(#tg2)" stroke="#a8a8a8" stroke-width="1"/><linearGradient id="tg1" x1="0" y1="0" x2="0" y2="1"><stop offset="0" stop-color="#faf2f2"/><stop offset="1" stop-color="#ecd9d9"/></linearGradient><path d="M132.0 374.5 L376.0 374.5 L376.0 393.5 Q376.0 395.5 374.0 395.5 L152.0 395.5 Z" fill="url(#tg1)" stroke="#a8a8a8" stroke-width="1"/><linearGradient id="tg0" x1="0" y1="0" x2="0" y2="1"><stop offset="0" stop-color="#f4faf2"/><stop offset="1" stop-color="#d8e6d6"/></linearGradient><path d="M29.7 374.5 L141.0 374.5 L141.0 393.5 Q141.0 395.5 139.0 395.5 L49.7 395.5 Z" fill="url(#tg0)" stroke="#a8a8a8" stroke-width="1"/><linearGradient id="tg6" x1="0" y1="0" x2="0" y2="1"><stop offset="0" stop-color="#f2f2fd"/><stop offset="1" stop-color="#eeeefa"/></linearGradient><path d="M1153.0 374.5 L1257.0 374.5 L1257.0 393.5 Q1257.0 395.5 1255.0 395.5 L1173.0 395.5 Z" fill="url(#tg6)" stroke="#a8a8a8" stroke-width="1"/><rect x="1171" y="393" width="86" height="2.5" fill="#1a78d6"/><ellipse cx="58" cy="378.5" rx="6" ry="2.2" fill="#e8e8e8" stroke="#555" stroke-width="0.8"/><path d="M52 379 L57 386 V391 L59.5 391 V386 L64 379" fill="#aaa" stroke="#666" stroke-width="0.6"/><path d="M51 385 L56 390 M56 385 L51 390" stroke="#e83a1a" stroke-width="2"/><ellipse cx="552" cy="380" rx="5.5" ry="2" fill="#e8e8e8" stroke="#555" stroke-width="0.8"/><path d="M546.5 380.5 L551 386 V391 L553 391 V386 L557.5 380.5" fill="#aaa" stroke="#666" stroke-width="0.6"/><path d="M556 384 V377 M553 380 L556 376.5 L559 380" fill="none" stroke="#22aa22" stroke-width="1.6"/></svg>
<div class="t" style="left:75.3px;top:378px;font-size:12px;transform:scaleX(0.9725);transform-origin:0 0">Ohne Filter</div>
<div class="t" style="left:159.3px;top:378px;font-size:12px;transform:scaleX(1.0000);transform-origin:0 0">1: Nur offene Positionen (nicht bestellt)</div>
<div class="t" style="left:393.6px;top:378px;font-size:12px;transform:scaleX(0.9825);transform-origin:0 0">2: Nur Anfragen (Typ 56)</div>
<div class="t" style="left:569.0px;top:378px;font-size:12px;transform:scaleX(0.9600);transform-origin:0 0">3: Ohne Anfragen (Typ 56 ausschliessen)</div>
<div class="t" style="left:806.8px;top:378px;font-size:12px;transform:scaleX(0.9867);transform-origin:0 0">4: Nur Anfragen Auswärtsbearbeitungen (Typ 57)</div>
<div class="t" style="left:1092.4px;top:378px;font-size:12px;transform:scaleX(0.9775);transform-origin:0 0">Meine Liste</div>
<div class="t" style="left:1180.0px;top:378px;font-size:12px;transform:scaleX(0.9900);transform-origin:0 0">Benutzerfilter</div>
<div class="a" style="left:28px;top:397px;width:2330px;height:980px;background:#efefef;border:1px solid #7a7e88"></div>
<div class="a" style="left:36px;top:406px;width:57px;height:21px;background:#fff"></div>
<div class="t " style="left:39.0px;top:410.1px;font-size:12.30px;">Typ</div>
<svg style="left:78px;top:410px" width="12" height="12"><path d="M5.5 1.5 L10 9.5 L1 9.5 Z" fill="none" stroke="#888" stroke-width="0.9"/></svg>
<div class="a" style="left:29px;top:435px;width:2327px;height:43px;background:#fff"></div>
<div class="a" style="left:41px;top:435px;width:1px;height:43px;background:#e4e4e4"></div>
<svg style="left:31px;top:435px" width="10" height="43"><rect x="2.8" y="5.7" width="1.6" height="1.6" fill="#111"/><rect x="2.8" y="9.7" width="1.6" height="1.6" fill="#111"/><rect x="2.8" y="13.7" width="1.6" height="1.6" fill="#111"/><rect x="5.2" y="6.0" width="4" height="1.1" fill="#111"/><rect x="5.2" y="8.0" width="4" height="1.1" fill="#111"/><rect x="5.2" y="10.0" width="4" height="1.1" fill="#111"/><rect x="5.2" y="12.0" width="4" height="1.1" fill="#111"/><rect x="5.2" y="14.0" width="4" height="1.1" fill="#111"/><rect x="2.8" y="26.7" width="1.6" height="1.6" fill="#111"/><rect x="2.8" y="30.7" width="1.6" height="1.6" fill="#111"/><rect x="2.8" y="34.7" width="1.6" height="1.6" fill="#111"/><rect x="5.2" y="27.0" width="4" height="1.1" fill="#111"/><rect x="5.2" y="29.0" width="4" height="1.1" fill="#111"/><rect x="5.2" y="31.0" width="4" height="1.1" fill="#111"/><rect x="5.2" y="33.0" width="4" height="1.1" fill="#111"/><rect x="5.2" y="35.0" width="4" height="1.1" fill="#111"/></svg>
<div class="t" style="left:749.5px;top:439.6px;width:0;font-size:12.30px;display:flex;justify-content:center;"><span>Basisangaben</span></div>
<div class="t" style="left:1485.5px;top:439.6px;width:0;font-size:12.30px;display:flex;justify-content:center;"><span>Text</span></div>
<div class="t" style="left:1828.0px;top:439.6px;width:0;font-size:12.30px;display:flex;justify-content:center;"><span>Preis / Lieferant</span></div>
<div class="t" style="left:2213.0px;top:439.6px;width:0;font-size:12.30px;display:flex;justify-content:center;"><span>Bestellung</span></div>
<div class="t" style="left:2323.5px;top:439.6px;width:0;font-size:12.30px;display:flex;justify-content:center;"><span>Anfrage</span></div>
<div class="a" style="left:1458px;top:437px;width:1px;height:19px;background:#e4e4e4"></div>
<div class="a" style="left:1512px;top:437px;width:1px;height:19px;background:#e4e4e4"></div>
<div class="a" style="left:2143px;top:437px;width:1px;height:19px;background:#e4e4e4"></div>
<div class="a" style="left:2283px;top:437px;width:1px;height:19px;background:#e4e4e4"></div>
<div class="a" style="left:41px;top:456px;width:87px;height:22px;overflow:hidden;"><div class="t " style="left:3.9px;top:4.9px;font-size:12.30px;">Position</div></div>
<div class="a" style="left:129px;top:456px;width:45px;height:22px;overflow:hidden;"><div class="t " style="left:4.4px;top:4.9px;font-size:12.30px;">Pos (BW)</div></div>
<div class="a" style="left:175px;top:456px;width:109px;height:22px;overflow:hidden;"><div class="t " style="left:3.9px;top:4.9px;font-size:12.30px;">Verursacherliste</div></div>
<div class="a" style="left:285px;top:456px;width:64px;height:22px;overflow:hidden;"><div class="t " style="left:4.0px;top:4.9px;font-size:12.30px;">Bestelldatum</div></div>
<div class="a" style="left:350px;top:456px;width:64px;height:22px;overflow:hidden;"><div class="t " style="left:4.0px;top:4.9px;font-size:12.30px;">Lieferdatum</div></div>
<div class="a" style="left:415px;top:456px;width:139px;height:22px;overflow:hidden;"><div class="t " style="left:22.0px;top:4.9px;font-size:12.30px;">Artikel-Nr.</div></div>
<div class="a" style="left:555px;top:456px;width:209px;height:22px;overflow:hidden;"><div class="t " style="left:4.2px;top:4.9px;font-size:12.30px;">Artikelbezeichnung</div></div>
<div class="a" style="left:765px;top:456px;width:121px;height:22px;overflow:hidden;"><div class="t " style="left:4.0px;top:4.9px;font-size:12.30px;">Dimension</div></div>
<div class="a" style="left:887px;top:456px;width:39px;height:22px;overflow:hidden;"><div class="t " style="left:4.3px;top:4.9px;font-size:12.30px;">Chargen</div></div>
<div class="a" style="left:927px;top:456px;width:73px;height:22px;overflow:hidden;"><div class="t " style="left:4.4px;top:4.9px;font-size:12.30px;">Prüfmerkmal</div></div>
<div class="a" style="left:1001px;top:456px;width:79px;height:22px;overflow:hidden;"><div class="t " style="left:4.5px;top:4.9px;font-size:12.30px;">Menge [Gesamt]</div></div>
<div class="a" style="left:1081px;top:456px;width:49px;height:22px;overflow:hidden;"><div class="t " style="left:4.0px;top:4.9px;font-size:12.30px;">ME</div></div>
<div class="a" style="left:1131px;top:456px;width:74px;height:22px;overflow:hidden;"><div class="t " style="left:4.4px;top:4.9px;font-size:12.30px;">Menge lager</div></div>
<div class="a" style="left:1206px;top:456px;width:74px;height:22px;overflow:hidden;"><div class="t " style="left:4.2px;top:4.9px;font-size:12.30px;">Menge verfügbar</div></div>
<div class="a" style="left:1281px;top:456px;width:73px;height:22px;overflow:hidden;"><div class="t " style="left:4.0px;top:4.9px;font-size:12.30px;">Sollbestand</div></div>
<div class="a" style="left:1355px;top:456px;width:55px;height:22px;overflow:hidden;"><div class="t " style="left:3.4px;top:4.9px;font-size:12.30px;">AC</div></div>
<div class="a" style="left:1411px;top:456px;width:45px;height:22px;overflow:hidden;"><div class="t " style="left:3.6px;top:4.9px;font-size:12.30px;">Zuschnitt</div></div>
<div class="a" style="left:1457px;top:456px;width:54px;height:22px;overflow:hidden;"><div class="t " style="left:3.8px;top:4.9px;font-size:12.30px;">Zusatztext</div></div>
<div class="a" style="left:1512px;top:456px;width:125px;height:22px;overflow:hidden;"><div class="t " style="left:22.5px;top:4.9px;font-size:12.30px;">Lieferant</div></div>
<div class="a" style="left:1638px;top:456px;width:111px;height:22px;overflow:hidden;"><div class="t " style="left:4.3px;top:4.9px;font-size:12.30px;">Preis [EP, GME, AZ, ...]</div></div>
<div class="a" style="left:1750px;top:456px;width:27px;height:22px;overflow:hidden;"><div class="t " style="left:3.7px;top:4.9px;font-size:12.30px;">Wert</div></div>
<div class="a" style="left:1778px;top:456px;width:176px;height:22px;overflow:hidden;"><div class="t " style="left:4.0px;top:4.9px;font-size:12.30px;">Preisursprung</div></div>
<div class="a" style="left:1955px;top:456px;width:105px;height:22px;overflow:hidden;"><div class="t " style="left:4.0px;top:4.9px;font-size:12.30px;">Losgröße</div></div>
<div class="a" style="left:2061px;top:456px;width:81px;height:22px;overflow:hidden;"><div class="t " style="left:4.0px;top:4.9px;font-size:12.30px;">Ab- / Zuschläge</div></div>
<div class="a" style="left:2143px;top:456px;width:79px;height:22px;overflow:hidden;"><div class="t " style="left:21.8px;top:4.9px;font-size:12.30px;">Bestell-Nr.</div></div>
<div class="a" style="left:2223px;top:456px;width:59px;height:22px;overflow:hidden;"><div class="t " style="left:21.7px;top:4.9px;font-size:12.30px;">Bestelldatum</div></div>
<div class="a" style="left:2283px;top:456px;width:60px;height:22px;overflow:hidden;"><div class="t " style="left:22.0px;top:4.9px;font-size:12.30px;">Anfrage-Nr.</div></div>
<div class="a" style="left:129px;top:458px;width:1px;height:19px;background:#e4e4e4"></div>
<div class="a" style="left:175px;top:458px;width:1px;height:19px;background:#e4e4e4"></div>
<div class="a" style="left:285px;top:458px;width:1px;height:19px;background:#e4e4e4"></div>
<div class="a" style="left:350px;top:458px;width:1px;height:19px;background:#e4e4e4"></div>
<div class="a" style="left:415px;top:458px;width:1px;height:19px;background:#e4e4e4"></div>
<div class="a" style="left:555px;top:458px;width:1px;height:19px;background:#e4e4e4"></div>
<div class="a" style="left:765px;top:458px;width:1px;height:19px;background:#e4e4e4"></div>
<div class="a" style="left:887px;top:458px;width:1px;height:19px;background:#e4e4e4"></div>
<div class="a" style="left:927px;top:458px;width:1px;height:19px;background:#e4e4e4"></div>
<div class="a" style="left:1001px;top:458px;width:1px;height:19px;background:#e4e4e4"></div>
<div class="a" style="left:1081px;top:458px;width:1px;height:19px;background:#e4e4e4"></div>
<div class="a" style="left:1131px;top:458px;width:1px;height:19px;background:#e4e4e4"></div>
<div class="a" style="left:1206px;top:458px;width:1px;height:19px;background:#e4e4e4"></div>
<div class="a" style="left:1281px;top:458px;width:1px;height:19px;background:#e4e4e4"></div>
<div class="a" style="left:1355px;top:458px;width:1px;height:19px;background:#e4e4e4"></div>
<div class="a" style="left:1411px;top:458px;width:1px;height:19px;background:#e4e4e4"></div>
<div class="a" style="left:1457px;top:458px;width:1px;height:19px;background:#e4e4e4"></div>
<div class="a" style="left:1512px;top:458px;width:1px;height:19px;background:#e4e4e4"></div>
<div class="a" style="left:1638px;top:458px;width:1px;height:19px;background:#e4e4e4"></div>
<div class="a" style="left:1750px;top:458px;width:1px;height:19px;background:#e4e4e4"></div>
<div class="a" style="left:1778px;top:458px;width:1px;height:19px;background:#e4e4e4"></div>
<div class="a" style="left:1955px;top:458px;width:1px;height:19px;background:#e4e4e4"></div>
<div class="a" style="left:2061px;top:458px;width:1px;height:19px;background:#e4e4e4"></div>
<div class="a" style="left:2143px;top:458px;width:1px;height:19px;background:#e4e4e4"></div>
<div class="a" style="left:2223px;top:458px;width:1px;height:19px;background:#e4e4e4"></div>
<div class="a" style="left:2283px;top:458px;width:1px;height:19px;background:#e4e4e4"></div>
<svg style="left:421.8px;top:462.5px" width="10" height="11"><path d="M0 0 L9 5 L0 10 Z" fill="#1e88e5"/></svg>
<svg style="left:1519.2px;top:462.5px" width="10" height="11"><path d="M0 0 L9 5 L0 10 Z" fill="#1e88e5"/></svg>
<svg style="left:2150.0px;top:462.5px" width="10" height="11"><path d="M0 0 L9 5 L0 10 Z" fill="#1e88e5"/></svg>
<svg style="left:2230.0px;top:462.5px" width="10" height="11"><path d="M0 0 L9 5 L0 10 Z" fill="#1e88e5"/></svg>
<svg style="left:2290.6px;top:462.5px" width="10" height="11"><path d="M0 0 L9 5 L0 10 Z" fill="#1e88e5"/></svg>
<svg style="left:2349px;top:463px" width="10" height="10"><path d="M0.5 0.5 H8.5 L4.5 8 Z" fill="none" stroke="#999" stroke-width="0.9"/></svg>
<div class="a" style="left:29px;top:478px;width:2327px;height:248px;background:#efefef"></div>
<div class="t " style="left:44.5px;top:481.9px;font-size:11.90px;">Typ : 30:Bedarf</div>
<div class="t " style="left:44.5px;top:689.9px;font-size:11.90px;">Typ : 56:Anfragen (BANF)</div>
<div class="a" style="left:41px;top:497px;width:1px;height:189px;background:#dcdcdc"></div>
<div class="a" style="left:41px;top:705px;width:1px;height:21px;background:#dcdcdc"></div>
<div class="a" style="left:57px;top:497px;width:33px;height:21px;background:#efefef"></div>
<div class="a" style="left:90px;top:497px;width:39px;height:21px;background:#8ccd84"></div>
<div class="a" style="left:129px;top:497px;width:46px;height:21px;background:#efefef"></div>
<div class="a" style="left:175px;top:497px;width:110px;height:21px;background:#fffee4"></div>
<div class="a" style="left:285px;top:497px;width:65px;height:21px;background:#efefef"></div>
<div class="a" style="left:350px;top:497px;width:65px;height:21px;background:#efefef"></div>
<div class="a" style="left:415px;top:497px;width:140px;height:21px;background:#efefef"></div>
<div class="a" style="left:555px;top:497px;width:210px;height:21px;background:#efefef"></div>
<div class="a" style="left:765px;top:497px;width:122px;height:21px;background:#fffee4"></div>
<div class="a" style="left:887px;top:497px;width:40px;height:21px;background:#fffee4"></div>
<div class="a" style="left:927px;top:497px;width:74px;height:21px;background:#fffee4"></div>
<div class="a" style="left:1001px;top:497px;width:80px;height:21px;background:#efefef"></div>
<div class="a" style="left:1081px;top:497px;width:50px;height:21px;background:#fffee4"></div>
<div class="a" style="left:1131px;top:497px;width:75px;height:21px;background:#fffee4"></div>
<div class="a" style="left:1206px;top:497px;width:75px;height:21px;background:#fffee4"></div>
<div class="a" style="left:1281px;top:497px;width:74px;height:21px;background:#fffee4"></div>
<div class="a" style="left:1355px;top:497px;width:56px;height:21px;background:#fffee4"></div>
<div class="a" style="left:1411px;top:497px;width:46px;height:21px;background:#efefef"></div>
<div class="a" style="left:1457px;top:497px;width:55px;height:21px;background:#c2e59c"></div>
<div class="a" style="left:1512px;top:497px;width:126px;height:21px;background:#f7b6a5"></div>
<div class="a" style="left:1638px;top:497px;width:112px;height:21px;background:#fffee4"></div>
<div class="a" style="left:1750px;top:497px;width:28px;height:21px;background:#fffee4"></div>
<div class="a" style="left:1778px;top:497px;width:177px;height:21px;background:#fffee4"></div>
<div class="a" style="left:1955px;top:497px;width:106px;height:21px;background:#efefef"></div>
<div class="a" style="left:2061px;top:497px;width:82px;height:21px;background:#fffee4"></div>
<div class="a" style="left:2143px;top:497px;width:80px;height:21px;background:#fffee4"></div>
<div class="a" style="left:2223px;top:497px;width:60px;height:21px;background:#fffee4"></div>
<div class="a" style="left:2283px;top:497px;width:73px;height:21px;background:#8ccd84"></div>
<div class="a" style="left:57px;top:517px;width:2299px;height:1px;background:#dcdcdc"></div>
<div class="a" style="left:129px;top:497px;width:1px;height:21px;background:#dcdcdc"></div>
<div class="a" style="left:175px;top:497px;width:1px;height:21px;background:#dcdcdc"></div>
<div class="a" style="left:285px;top:497px;width:1px;height:21px;background:#dcdcdc"></div>
<div class="a" style="left:350px;top:497px;width:1px;height:21px;background:#dcdcdc"></div>
<div class="a" style="left:415px;top:497px;width:1px;height:21px;background:#dcdcdc"></div>
<div class="a" style="left:555px;top:497px;width:1px;height:21px;background:#dcdcdc"></div>
<div class="a" style="left:765px;top:497px;width:1px;height:21px;background:#dcdcdc"></div>
<div class="a" style="left:887px;top:497px;width:1px;height:21px;background:#dcdcdc"></div>
<div class="a" style="left:927px;top:497px;width:1px;height:21px;background:#dcdcdc"></div>
<div class="a" style="left:1001px;top:497px;width:1px;height:21px;background:#dcdcdc"></div>
<div class="a" style="left:1081px;top:497px;width:1px;height:21px;background:#dcdcdc"></div>
<div class="a" style="left:1131px;top:497px;width:1px;height:21px;background:#dcdcdc"></div>
<div class="a" style="left:1206px;top:497px;width:1px;height:21px;background:#dcdcdc"></div>
<div class="a" style="left:1281px;top:497px;width:1px;height:21px;background:#dcdcdc"></div>
<div class="a" style="left:1355px;top:497px;width:1px;height:21px;background:#dcdcdc"></div>
<div class="a" style="left:1411px;top:497px;width:1px;height:21px;background:#dcdcdc"></div>
<div class="a" style="left:1457px;top:497px;width:1px;height:21px;background:#dcdcdc"></div>
<div class="a" style="left:1512px;top:497px;width:1px;height:21px;background:#dcdcdc"></div>
<div class="a" style="left:1638px;top:497px;width:1px;height:21px;background:#dcdcdc"></div>
<div class="a" style="left:1750px;top:497px;width:1px;height:21px;background:#dcdcdc"></div>
<div class="a" style="left:1778px;top:497px;width:1px;height:21px;background:#dcdcdc"></div>
<div class="a" style="left:1955px;top:497px;width:1px;height:21px;background:#dcdcdc"></div>
<div class="a" style="left:2061px;top:497px;width:1px;height:21px;background:#dcdcdc"></div>
<div class="a" style="left:2143px;top:497px;width:1px;height:21px;background:#dcdcdc"></div>
<div class="a" style="left:2223px;top:497px;width:1px;height:21px;background:#dcdcdc"></div>
<div class="a" style="left:2283px;top:497px;width:1px;height:21px;background:#dcdcdc"></div>
<div class="a" style="left:57px;top:497px;width:1px;height:21px;background:#dcdcdc"></div>
<svg style="left:60px;top:503px" width="10" height="10"><rect x="0.5" y="0.5" width="8.5" height="8.5" rx="1" fill="#f4f4f4" stroke="#888"/><path d="M2.5 4.75 H7 M4.75 2.5 V7" stroke="#2a3a9a" stroke-width="1"/></svg>
<div class="a" style="left:90px;top:497px;width:38px;height:21px;overflow:hidden"><div class="t" style="right:1.5px;top:4.2px;font-size:12.20px;color:#000;">20</div></div>
<div class="a" style="left:146px;top:500px;width:13px;height:13px;background:#fff;border:1.4px solid #333"></div>
<div class="a" style="left:175px;top:497px;width:109px;height:21px;overflow:hidden"><div class="t" style="left:3.0px;top:5.3px;font-size:10.85px;color:#000;">ABK 865548;ABK 8...</div></div>
<div class="a" style="left:285px;top:497px;width:64px;height:21px;overflow:hidden"><div class="t" style="left:3.0px;top:4.2px;font-size:12.20px;color:#f00;">10.10.25</div></div>
<div class="a" style="left:350px;top:497px;width:64px;height:21px;overflow:hidden"><div class="t" style="left:3.0px;top:4.2px;font-size:12.20px;color:#000;">21.11.25</div></div>
<div class="a" style="left:415px;top:497px;width:139px;height:21px;overflow:hidden"><div class="t" style="left:3.0px;top:4.3px;font-size:12.05px;color:#000;text-decoration:underline;">E.B.PKW.A-1168534-0...</div></div>
<div class="a" style="left:555px;top:497px;width:209px;height:21px;overflow:hidden"><div class="t" style="left:3.0px;top:4.1px;font-size:12.30px;color:#000;">*Kühlung Sensoreinheit*</div></div>
<div class="a" style="left:765px;top:497px;width:121px;height:21px;overflow:hidden"><div class="t" style="left:3.0px;top:5.3px;font-size:10.90px;color:#000;"></div></div>
<div class="a" style="left:901px;top:500px;width:13px;height:13px;background:#fff;border:1.4px solid #333"></div>
<div class="a" style="left:958px;top:500px;width:13px;height:13px;background:#fff;border:1.4px solid #333"></div>
<div class="a" style="left:1001px;top:497px;width:79px;height:21px;overflow:hidden"><div class="t" style="right:1.5px;top:4.2px;font-size:12.20px;color:#000;">330,00</div></div>
<div class="a" style="left:1081px;top:497px;width:49px;height:21px;overflow:hidden"><div class="t" style="left:3.0px;top:4.2px;font-size:12.20px;color:#000;">Stk</div></div>
<div class="a" style="left:1131px;top:497px;width:74px;height:21px;overflow:hidden"><div class="t" style="right:1.5px;top:4.2px;font-size:12.20px;color:#000;">0,000</div></div>
<div class="a" style="left:1206px;top:497px;width:74px;height:21px;overflow:hidden"><div class="t" style="right:1.5px;top:4.2px;font-size:12.20px;color:#000;">-330,00</div></div>
<div class="a" style="left:1355px;top:497px;width:55px;height:21px;overflow:hidden"><div class="t" style="left:3.0px;top:5.9px;font-size:10.20px;color:#000;">KT1001</div></div>
<div class="a" style="left:1428px;top:500px;width:13px;height:13px;background:#fff;border:1.4px solid #333"></div>
<svg style="left:1477px;top:500px" width="17" height="14"><path d="M0.5 0.5 H12 L15.5 4 V13.5 H0.5 Z" fill="#fafafa" stroke="#d4d4d4"/><path d="M12 0.5 V4 H15.5" fill="#e4e4e4" stroke="#d4d4d4"/><text x="7.5" y="10.5" font-size="10" font-style="italic" fill="#9a9a9a" text-anchor="middle" font-family="Liberation Sans">a</text></svg>
<div class="a" style="left:1638px;top:497px;width:111px;height:21px;overflow:hidden"><div class="t" style="right:1.5px;top:4.2px;font-size:12.20px;color:#000;">10,00</div></div>
<div class="a" style="left:1750px;top:497px;width:27px;height:21px;overflow:hidden"><div class="t" style="left:6.0px;top:4.2px;font-size:12.20px;color:#000;">3....</div></div>
<div class="a" style="left:1778px;top:497px;width:176px;height:21px;overflow:hidden"><div class="t" style="left:3.0px;top:5.2px;font-size:11.00px;color:#000;">Anf.Nr. ANFL25-00121 Ang.0815</div></div>
<div class="a" style="left:1955px;top:497px;width:105px;height:21px;overflow:hidden"><div class="t" style="right:1.5px;top:4.2px;font-size:12.20px;color:#000;">1,00</div></div>
<div class="a" style="left:2096px;top:500px;width:13px;height:13px;background:#fff;border:1.4px solid #333"></div>
<div class="a" style="left:2143px;top:497px;width:79px;height:21px;overflow:hidden"><div class="t" style="left:4.0px;top:6.7px;font-size:9.20px;color:#555;">BE25-00183</div></div>
<div class="a" style="left:2283px;top:497px;width:72px;height:21px;overflow:hidden"><div class="t" style="left:3.0px;top:5.0px;font-size:11.20px;color:#000;">ANFL25-00121</div></div>
<div class="a" style="left:57px;top:518px;width:33px;height:21px;background:#ffffff"></div>
<div class="a" style="left:90px;top:518px;width:39px;height:21px;background:#8ccd84"></div>
<div class="a" style="left:129px;top:518px;width:46px;height:21px;background:#ffffff"></div>
<div class="a" style="left:175px;top:518px;width:110px;height:21px;background:#fffee4"></div>
<div class="a" style="left:285px;top:518px;width:65px;height:21px;background:#ffffff"></div>
<div class="a" style="left:350px;top:518px;width:65px;height:21px;background:#ffffff"></div>
<div class="a" style="left:415px;top:518px;width:140px;height:21px;background:#ffffff"></div>
<div class="a" style="left:555px;top:518px;width:210px;height:21px;background:#ffffff"></div>
<div class="a" style="left:765px;top:518px;width:122px;height:21px;background:#fffee4"></div>
<div class="a" style="left:887px;top:518px;width:40px;height:21px;background:#fffee4"></div>
<div class="a" style="left:927px;top:518px;width:74px;height:21px;background:#fffee4"></div>
<div class="a" style="left:1001px;top:518px;width:80px;height:21px;background:#ffffff"></div>
<div class="a" style="left:1081px;top:518px;width:50px;height:21px;background:#fffee4"></div>
<div class="a" style="left:1131px;top:518px;width:75px;height:21px;background:#fffee4"></div>
<div class="a" style="left:1206px;top:518px;width:75px;height:21px;background:#fffee4"></div>
<div class="a" style="left:1281px;top:518px;width:74px;height:21px;background:#fffee4"></div>
<div class="a" style="left:1355px;top:518px;width:56px;height:21px;background:#fffee4"></div>
<div class="a" style="left:1411px;top:518px;width:46px;height:21px;background:#ffffff"></div>
<div class="a" style="left:1457px;top:518px;width:55px;height:21px;background:#c2e59c"></div>
<div class="a" style="left:1512px;top:518px;width:126px;height:21px;background:#ffffff"></div>
<div class="a" style="left:1638px;top:518px;width:112px;height:21px;background:#fffee4"></div>
<div class="a" style="left:1750px;top:518px;width:28px;height:21px;background:#fffee4"></div>
<div class="a" style="left:1778px;top:518px;width:177px;height:21px;background:#fffee4"></div>
<div class="a" style="left:1955px;top:518px;width:106px;height:21px;background:#ffffff"></div>
<div class="a" style="left:2061px;top:518px;width:82px;height:21px;background:#fffee4"></div>
<div class="a" style="left:2143px;top:518px;width:80px;height:21px;background:#fffee4"></div>
<div class="a" style="left:2223px;top:518px;width:60px;height:21px;background:#fffee4"></div>
<div class="a" style="left:2283px;top:518px;width:73px;height:21px;background:#8ccd84"></div>
<div class="a" style="left:57px;top:538px;width:2299px;height:1px;background:#dcdcdc"></div>
<div class="a" style="left:129px;top:518px;width:1px;height:21px;background:#dcdcdc"></div>
<div class="a" style="left:175px;top:518px;width:1px;height:21px;background:#dcdcdc"></div>
<div class="a" style="left:285px;top:518px;width:1px;height:21px;background:#dcdcdc"></div>
<div class="a" style="left:350px;top:518px;width:1px;height:21px;background:#dcdcdc"></div>
<div class="a" style="left:415px;top:518px;width:1px;height:21px;background:#dcdcdc"></div>
<div class="a" style="left:555px;top:518px;width:1px;height:21px;background:#dcdcdc"></div>
<div class="a" style="left:765px;top:518px;width:1px;height:21px;background:#dcdcdc"></div>
<div class="a" style="left:887px;top:518px;width:1px;height:21px;background:#dcdcdc"></div>
<div class="a" style="left:927px;top:518px;width:1px;height:21px;background:#dcdcdc"></div>
<div class="a" style="left:1001px;top:518px;width:1px;height:21px;background:#dcdcdc"></div>
<div class="a" style="left:1081px;top:518px;width:1px;height:21px;background:#dcdcdc"></div>
<div class="a" style="left:1131px;top:518px;width:1px;height:21px;background:#dcdcdc"></div>
<div class="a" style="left:1206px;top:518px;width:1px;height:21px;background:#dcdcdc"></div>
<div class="a" style="left:1281px;top:518px;width:1px;height:21px;background:#dcdcdc"></div>
<div class="a" style="left:1355px;top:518px;width:1px;height:21px;background:#dcdcdc"></div>
<div class="a" style="left:1411px;top:518px;width:1px;height:21px;background:#dcdcdc"></div>
<div class="a" style="left:1457px;top:518px;width:1px;height:21px;background:#dcdcdc"></div>
<div class="a" style="left:1512px;top:518px;width:1px;height:21px;background:#dcdcdc"></div>
<div class="a" style="left:1638px;top:518px;width:1px;height:21px;background:#dcdcdc"></div>
<div class="a" style="left:1750px;top:518px;width:1px;height:21px;background:#dcdcdc"></div>
<div class="a" style="left:1778px;top:518px;width:1px;height:21px;background:#dcdcdc"></div>
<div class="a" style="left:1955px;top:518px;width:1px;height:21px;background:#dcdcdc"></div>
<div class="a" style="left:2061px;top:518px;width:1px;height:21px;background:#dcdcdc"></div>
<div class="a" style="left:2143px;top:518px;width:1px;height:21px;background:#dcdcdc"></div>
<div class="a" style="left:2223px;top:518px;width:1px;height:21px;background:#dcdcdc"></div>
<div class="a" style="left:2283px;top:518px;width:1px;height:21px;background:#dcdcdc"></div>
<div class="a" style="left:57px;top:518px;width:1px;height:21px;background:#dcdcdc"></div>
<svg style="left:60px;top:524px" width="10" height="10"><rect x="0.5" y="0.5" width="8.5" height="8.5" rx="1" fill="#f4f4f4" stroke="#888"/><path d="M2.5 4.75 H7 M4.75 2.5 V7" stroke="#2a3a9a" stroke-width="1"/></svg>
<div class="a" style="left:90px;top:518px;width:38px;height:21px;overflow:hidden"><div class="t" style="right:1.5px;top:4.2px;font-size:12.20px;color:#000;">80</div></div>
<div class="a" style="left:146px;top:521px;width:13px;height:13px;background:#fff;border:1.4px solid #333"></div>
<div class="a" style="left:175px;top:518px;width:109px;height:21px;overflow:hidden"><div class="t" style="left:3.0px;top:5.3px;font-size:10.85px;color:#000;">ABK 865482;ABK 8...</div></div>
<div class="a" style="left:285px;top:518px;width:64px;height:21px;overflow:hidden"><div class="t" style="left:3.0px;top:4.2px;font-size:12.20px;color:#f00;">07.08.25</div></div>
<div class="a" style="left:350px;top:518px;width:64px;height:21px;overflow:hidden"><div class="t" style="left:3.0px;top:4.2px;font-size:12.20px;color:#000;">27.11.25</div></div>
<div class="a" style="left:415px;top:518px;width:139px;height:21px;overflow:hidden"><div class="t" style="left:3.0px;top:4.3px;font-size:12.05px;color:#000;text-decoration:underline;">D.W.13.1100004</div></div>
<div class="a" style="left:555px;top:518px;width:209px;height:21px;overflow:hidden"><div class="t" style="left:3.0px;top:4.1px;font-size:12.30px;color:#000;">*Dichtung-Schutz13 mm*</div></div>
<div class="a" style="left:765px;top:518px;width:121px;height:21px;overflow:hidden"><div class="t" style="left:3.0px;top:5.3px;font-size:10.90px;color:#000;"></div></div>
<div class="a" style="left:901px;top:521px;width:13px;height:13px;background:#fff;border:1.4px solid #333"></div>
<div class="a" style="left:958px;top:521px;width:13px;height:13px;background:#fff;border:1.4px solid #333"></div>
<div class="a" style="left:1001px;top:518px;width:79px;height:21px;overflow:hidden"><div class="t" style="right:1.5px;top:4.2px;font-size:12.20px;color:#000;">420,00</div></div>
<div class="a" style="left:1081px;top:518px;width:49px;height:21px;overflow:hidden"><div class="t" style="left:3.0px;top:4.2px;font-size:12.20px;color:#000;">Stk</div></div>
<div class="a" style="left:1131px;top:518px;width:74px;height:21px;overflow:hidden"><div class="t" style="right:1.5px;top:4.2px;font-size:12.20px;color:#000;">0,000</div></div>
<div class="a" style="left:1206px;top:518px;width:74px;height:21px;overflow:hidden"><div class="t" style="right:1.5px;top:4.2px;font-size:12.20px;color:#000;">-680,00</div></div>
<div class="a" style="left:1355px;top:518px;width:55px;height:21px;overflow:hidden"><div class="t" style="left:3.0px;top:5.9px;font-size:10.20px;color:#000;">KT1001</div></div>
<div class="a" style="left:1428px;top:521px;width:13px;height:13px;background:#fff;border:1.4px solid #333"></div>
<svg style="left:1477px;top:521px" width="17" height="14"><path d="M0.5 0.5 H12 L15.5 4 V13.5 H0.5 Z" fill="#fafafa" stroke="#d4d4d4"/><path d="M12 0.5 V4 H15.5" fill="#e4e4e4" stroke="#d4d4d4"/><text x="7.5" y="10.5" font-size="10" font-style="italic" fill="#9a9a9a" text-anchor="middle" font-family="Liberation Sans">a</text></svg>
<div class="a" style="left:1512px;top:518px;width:125px;height:21px;overflow:hidden"><div class="t" style="left:3.0px;top:4.2px;font-size:12.20px;color:#000;text-decoration:underline;">STAHL</div></div>
<div class="a" style="left:1638px;top:518px;width:111px;height:21px;overflow:hidden"><div class="t" style="right:1.5px;top:4.2px;font-size:12.20px;color:#000;">2,00</div></div>
<div class="a" style="left:1750px;top:518px;width:27px;height:21px;overflow:hidden"><div class="t" style="left:6.0px;top:4.2px;font-size:12.20px;color:#000;">84...</div></div>
<div class="a" style="left:1778px;top:518px;width:176px;height:21px;overflow:hidden"><div class="t" style="left:3.0px;top:5.2px;font-size:11.00px;color:#000;">Anf.Nr. ANFL25-00121 Ang.0815</div></div>
<div class="a" style="left:1955px;top:518px;width:105px;height:21px;overflow:hidden"><div class="t" style="right:1.5px;top:4.2px;font-size:12.20px;color:#000;">1,00</div></div>
<div class="a" style="left:2096px;top:521px;width:13px;height:13px;background:#fff;border:1.4px solid #333"></div>
<div class="a" style="left:2283px;top:518px;width:72px;height:21px;overflow:hidden"><div class="t" style="left:3.0px;top:5.0px;font-size:11.20px;color:#000;">ANFL25-00121</div></div>
<div class="a" style="left:57px;top:539px;width:33px;height:21px;background:#efefef"></div>
<div class="a" style="left:90px;top:539px;width:39px;height:21px;background:#8ccd84"></div>
<div class="a" style="left:129px;top:539px;width:46px;height:21px;background:#0078d7"></div>
<div class="a" style="left:175px;top:539px;width:110px;height:21px;background:#0078d7"></div>
<div class="a" style="left:285px;top:539px;width:65px;height:21px;background:#0078d7"></div>
<div class="a" style="left:350px;top:539px;width:65px;height:21px;background:#0078d7"></div>
<div class="a" style="left:415px;top:539px;width:140px;height:21px;background:#0078d7"></div>
<div class="a" style="left:555px;top:539px;width:210px;height:21px;background:#0078d7"></div>
<div class="a" style="left:765px;top:539px;width:122px;height:21px;background:#0078d7"></div>
<div class="a" style="left:887px;top:539px;width:40px;height:21px;background:#f7b6a5"></div>
<div class="a" style="left:927px;top:539px;width:74px;height:21px;background:#f7b6a5"></div>
<div class="a" style="left:1001px;top:539px;width:80px;height:21px;background:#0078d7"></div>
<div class="a" style="left:1081px;top:539px;width:50px;height:21px;background:#0078d7"></div>
<div class="a" style="left:1131px;top:539px;width:75px;height:21px;background:#0078d7"></div>
<div class="a" style="left:1206px;top:539px;width:75px;height:21px;background:#0078d7"></div>
<div class="a" style="left:1281px;top:539px;width:74px;height:21px;background:#0078d7"></div>
<div class="a" style="left:1355px;top:539px;width:56px;height:21px;background:#0078d7"></div>
<div class="a" style="left:1411px;top:539px;width:46px;height:21px;background:#0078d7"></div>
<div class="a" style="left:1457px;top:539px;width:55px;height:21px;background:#0078d7"></div>
<div class="a" style="left:1512px;top:539px;width:126px;height:21px;background:#f7b6a5"></div>
<div class="a" style="left:1638px;top:539px;width:112px;height:21px;background:#0078d7"></div>
<div class="a" style="left:1750px;top:539px;width:28px;height:21px;background:#0078d7"></div>
<div class="a" style="left:1778px;top:539px;width:177px;height:21px;background:#0078d7"></div>
<div class="a" style="left:1955px;top:539px;width:106px;height:21px;background:#0078d7"></div>
<div class="a" style="left:2061px;top:539px;width:82px;height:21px;background:#0078d7"></div>
<div class="a" style="left:2143px;top:539px;width:80px;height:21px;background:#0078d7"></div>
<div class="a" style="left:2223px;top:539px;width:60px;height:21px;background:#0078d7"></div>
<div class="a" style="left:2283px;top:539px;width:73px;height:21px;background:#8ccd84"></div>
<div class="a" style="left:57px;top:559px;width:2299px;height:1px;background:#dcdcdc"></div>
<div class="a" style="left:129px;top:539px;width:1px;height:21px;background:#dcdcdc"></div>
<div class="a" style="left:175px;top:539px;width:1px;height:21px;background:#dcdcdc"></div>
<div class="a" style="left:285px;top:539px;width:1px;height:21px;background:#dcdcdc"></div>
<div class="a" style="left:350px;top:539px;width:1px;height:21px;background:#dcdcdc"></div>
<div class="a" style="left:415px;top:539px;width:1px;height:21px;background:#dcdcdc"></div>
<div class="a" style="left:555px;top:539px;width:1px;height:21px;background:#dcdcdc"></div>
<div class="a" style="left:765px;top:539px;width:1px;height:21px;background:#dcdcdc"></div>
<div class="a" style="left:887px;top:539px;width:1px;height:21px;background:#dcdcdc"></div>
<div class="a" style="left:927px;top:539px;width:1px;height:21px;background:#dcdcdc"></div>
<div class="a" style="left:1001px;top:539px;width:1px;height:21px;background:#dcdcdc"></div>
<div class="a" style="left:1081px;top:539px;width:1px;height:21px;background:#dcdcdc"></div>
<div class="a" style="left:1131px;top:539px;width:1px;height:21px;background:#dcdcdc"></div>
<div class="a" style="left:1206px;top:539px;width:1px;height:21px;background:#dcdcdc"></div>
<div class="a" style="left:1281px;top:539px;width:1px;height:21px;background:#dcdcdc"></div>
<div class="a" style="left:1355px;top:539px;width:1px;height:21px;background:#dcdcdc"></div>
<div class="a" style="left:1411px;top:539px;width:1px;height:21px;background:#dcdcdc"></div>
<div class="a" style="left:1457px;top:539px;width:1px;height:21px;background:#dcdcdc"></div>
<div class="a" style="left:1512px;top:539px;width:1px;height:21px;background:#dcdcdc"></div>
<div class="a" style="left:1638px;top:539px;width:1px;height:21px;background:#dcdcdc"></div>
<div class="a" style="left:1750px;top:539px;width:1px;height:21px;background:#dcdcdc"></div>
<div class="a" style="left:1778px;top:539px;width:1px;height:21px;background:#dcdcdc"></div>
<div class="a" style="left:1955px;top:539px;width:1px;height:21px;background:#dcdcdc"></div>
<div class="a" style="left:2061px;top:539px;width:1px;height:21px;background:#dcdcdc"></div>
<div class="a" style="left:2143px;top:539px;width:1px;height:21px;background:#dcdcdc"></div>
<div class="a" style="left:2223px;top:539px;width:1px;height:21px;background:#dcdcdc"></div>
<div class="a" style="left:2283px;top:539px;width:1px;height:21px;background:#dcdcdc"></div>
<div class="a" style="left:57px;top:539px;width:1px;height:21px;background:#dcdcdc"></div>
<svg style="left:60px;top:545px" width="10" height="10"><rect x="0.5" y="0.5" width="8.5" height="8.5" rx="1" fill="#f4f4f4" stroke="#888"/><path d="M2.5 4.75 H7 M4.75 2.5 V7" stroke="#2a3a9a" stroke-width="1"/></svg>
<div class="a" style="left:90px;top:539px;width:38px;height:21px;overflow:hidden"><div class="t" style="right:1.5px;top:4.2px;font-size:12.20px;color:#fff;">140</div></div>
<div class="a" style="left:146px;top:542px;width:13px;height:13px;background:#fff;border:1.4px solid #333"></div>
<div class="a" style="left:175px;top:539px;width:109px;height:21px;overflow:hidden"><div class="t" style="left:3.0px;top:5.3px;font-size:10.85px;color:#fff;">ABK 865495;ABK 8...</div></div>
<div class="a" style="left:285px;top:539px;width:64px;height:21px;overflow:hidden"><div class="t" style="left:3.0px;top:4.2px;font-size:12.20px;color:#fff;">27.11.25</div></div>
<div class="a" style="left:350px;top:539px;width:64px;height:21px;overflow:hidden"><div class="t" style="left:3.0px;top:4.2px;font-size:12.20px;color:#fff;">28.11.25</div></div>
<div class="a" style="left:415px;top:539px;width:139px;height:21px;overflow:hidden"><div class="t" style="left:3.0px;top:4.3px;font-size:12.05px;color:#fff;text-decoration:underline;">1100017</div></div>
<div class="a" style="left:555px;top:539px;width:209px;height:21px;overflow:hidden"><div class="t" style="left:3.0px;top:4.1px;font-size:12.30px;color:#fff;">*Stahlblech*</div></div>
<div class="a" style="left:765px;top:539px;width:121px;height:21px;overflow:hidden"><div class="t" style="left:3.0px;top:5.3px;font-size:10.90px;color:#fff;">6000x80x10</div></div>
<div class="a" style="left:901px;top:542px;width:13px;height:13px;background:#fff;border:1.4px solid #333"></div><svg style="left:901px;top:542px" width="13" height="13"><path d="M2.5 6.5 L5.2 9.2 L10.5 3.3" fill="none" stroke="#222" stroke-width="1.3"/></svg>
<div class="a" style="left:958px;top:542px;width:13px;height:13px;background:#fff;border:1.4px solid #333"></div><svg style="left:958px;top:542px" width="13" height="13"><path d="M2.5 6.5 L5.2 9.2 L10.5 3.3" fill="none" stroke="#222" stroke-width="1.3"/></svg>
<div class="a" style="left:1001px;top:539px;width:79px;height:21px;overflow:hidden"><div class="t" style="right:1.5px;top:4.2px;font-size:12.20px;color:#fff;">9.280,00</div></div>
<div class="a" style="left:1081px;top:539px;width:49px;height:21px;overflow:hidden"><div class="t" style="left:3.0px;top:4.2px;font-size:12.20px;color:#fff;">mm</div></div>
<div class="a" style="left:1131px;top:539px;width:74px;height:21px;overflow:hidden"><div class="t" style="right:1.5px;top:4.2px;font-size:12.20px;color:#fff;">0,000</div></div>
<div class="a" style="left:1206px;top:539px;width:74px;height:21px;overflow:hidden"><div class="t" style="right:1.5px;top:4.2px;font-size:12.20px;color:#fff;">-9.280,00</div></div>
<div class="a" style="left:1355px;top:539px;width:55px;height:21px;overflow:hidden"><div class="t" style="left:3.0px;top:5.9px;font-size:10.20px;color:#fff;">RM1001</div></div>
<div class="a" style="left:1428px;top:542px;width:13px;height:13px;background:#fff;border:1.4px solid #333"></div><svg style="left:1428px;top:542px" width="13" height="13"><path d="M2.5 6.5 L5.2 9.2 L10.5 3.3" fill="none" stroke="#222" stroke-width="1.3"/></svg>
<svg style="left:1468px;top:542px" width="17" height="14"><path d="M0.5 0.5 H12 L15.5 4 V13.5 H0.5 Z" fill="#fafafa" stroke="#d4d4d4"/><path d="M12 0.5 V4 H15.5" fill="#e4e4e4" stroke="#d4d4d4"/><text x="7.5" y="10.5" font-size="10" font-style="italic" fill="#9a9a9a" text-anchor="middle" font-family="Liberation Sans">a</text></svg>
<div class="a" style="left:1638px;top:539px;width:111px;height:21px;overflow:hidden"><div class="t" style="right:1.5px;top:4.2px;font-size:12.20px;color:#fff;">0,00</div></div>
<div class="a" style="left:1750px;top:539px;width:27px;height:21px;overflow:hidden"><div class="t" style="left:6.0px;top:4.2px;font-size:12.20px;color:#fff;">0</div></div>
<div class="a" style="left:1955px;top:539px;width:105px;height:21px;overflow:hidden"><div class="t" style="right:1.5px;top:4.2px;font-size:12.20px;color:#fff;">1,00</div></div>
<div class="a" style="left:2096px;top:542px;width:13px;height:13px;background:#fff;border:1.4px solid #333"></div>
<div class="a" style="left:2283px;top:539px;width:72px;height:21px;overflow:hidden"><div class="t" style="left:3.0px;top:5.0px;font-size:11.20px;color:#fff;">ANFL25-00121</div></div>
<div class="a" style="left:57px;top:560px;width:33px;height:21px;background:#ffffff"></div>
<div class="a" style="left:90px;top:560px;width:39px;height:21px;background:#ffffff"></div>
<div class="a" style="left:129px;top:560px;width:46px;height:21px;background:#ffffff"></div>
<div class="a" style="left:175px;top:560px;width:110px;height:21px;background:#fffee4"></div>
<div class="a" style="left:285px;top:560px;width:65px;height:21px;background:#ffffff"></div>
<div class="a" style="left:350px;top:560px;width:65px;height:21px;background:#ffffff"></div>
<div class="a" style="left:415px;top:560px;width:140px;height:21px;background:#ffffff"></div>
<div class="a" style="left:555px;top:560px;width:210px;height:21px;background:#ffffff"></div>
<div class="a" style="left:765px;top:560px;width:122px;height:21px;background:#fffee4"></div>
<div class="a" style="left:887px;top:560px;width:40px;height:21px;background:#fffee4"></div>
<div class="a" style="left:927px;top:560px;width:74px;height:21px;background:#fffee4"></div>
<div class="a" style="left:1001px;top:560px;width:80px;height:21px;background:#ffffff"></div>
<div class="a" style="left:1081px;top:560px;width:50px;height:21px;background:#fffee4"></div>
<div class="a" style="left:1131px;top:560px;width:75px;height:21px;background:#fffee4"></div>
<div class="a" style="left:1206px;top:560px;width:75px;height:21px;background:#fffee4"></div>
<div class="a" style="left:1281px;top:560px;width:74px;height:21px;background:#fffee4"></div>
<div class="a" style="left:1355px;top:560px;width:56px;height:21px;background:#fffee4"></div>
<div class="a" style="left:1411px;top:560px;width:46px;height:21px;background:#ffffff"></div>
<div class="a" style="left:1457px;top:560px;width:55px;height:21px;background:#c2e59c"></div>
<div class="a" style="left:1512px;top:560px;width:126px;height:21px;background:#ffffff"></div>
<div class="a" style="left:1638px;top:560px;width:112px;height:21px;background:#fffee4"></div>
<div class="a" style="left:1750px;top:560px;width:28px;height:21px;background:#fffee4"></div>
<div class="a" style="left:1778px;top:560px;width:177px;height:21px;background:#fffee4"></div>
<div class="a" style="left:1955px;top:560px;width:106px;height:21px;background:#ffffff"></div>
<div class="a" style="left:2061px;top:560px;width:82px;height:21px;background:#fffee4"></div>
<div class="a" style="left:2143px;top:560px;width:80px;height:21px;background:#fffee4"></div>
<div class="a" style="left:2223px;top:560px;width:60px;height:21px;background:#fffee4"></div>
<div class="a" style="left:2283px;top:560px;width:73px;height:21px;background:#fffee4"></div>
<div class="a" style="left:57px;top:580px;width:2299px;height:1px;background:#dcdcdc"></div>
<div class="a" style="left:129px;top:560px;width:1px;height:21px;background:#dcdcdc"></div>
<div class="a" style="left:175px;top:560px;width:1px;height:21px;background:#dcdcdc"></div>
<div class="a" style="left:285px;top:560px;width:1px;height:21px;background:#dcdcdc"></div>
<div class="a" style="left:350px;top:560px;width:1px;height:21px;background:#dcdcdc"></div>
<div class="a" style="left:415px;top:560px;width:1px;height:21px;background:#dcdcdc"></div>
<div class="a" style="left:555px;top:560px;width:1px;height:21px;background:#dcdcdc"></div>
<div class="a" style="left:765px;top:560px;width:1px;height:21px;background:#dcdcdc"></div>
<div class="a" style="left:887px;top:560px;width:1px;height:21px;background:#dcdcdc"></div>
<div class="a" style="left:927px;top:560px;width:1px;height:21px;background:#dcdcdc"></div>
<div class="a" style="left:1001px;top:560px;width:1px;height:21px;background:#dcdcdc"></div>
<div class="a" style="left:1081px;top:560px;width:1px;height:21px;background:#dcdcdc"></div>
<div class="a" style="left:1131px;top:560px;width:1px;height:21px;background:#dcdcdc"></div>
<div class="a" style="left:1206px;top:560px;width:1px;height:21px;background:#dcdcdc"></div>
<div class="a" style="left:1281px;top:560px;width:1px;height:21px;background:#dcdcdc"></div>
<div class="a" style="left:1355px;top:560px;width:1px;height:21px;background:#dcdcdc"></div>
<div class="a" style="left:1411px;top:560px;width:1px;height:21px;background:#dcdcdc"></div>
<div class="a" style="left:1457px;top:560px;width:1px;height:21px;background:#dcdcdc"></div>
<div class="a" style="left:1512px;top:560px;width:1px;height:21px;background:#dcdcdc"></div>
<div class="a" style="left:1638px;top:560px;width:1px;height:21px;background:#dcdcdc"></div>
<div class="a" style="left:1750px;top:560px;width:1px;height:21px;background:#dcdcdc"></div>
<div class="a" style="left:1778px;top:560px;width:1px;height:21px;background:#dcdcdc"></div>
<div class="a" style="left:1955px;top:560px;width:1px;height:21px;background:#dcdcdc"></div>
<div class="a" style="left:2061px;top:560px;width:1px;height:21px;background:#dcdcdc"></div>
<div class="a" style="left:2143px;top:560px;width:1px;height:21px;background:#dcdcdc"></div>
<div class="a" style="left:2223px;top:560px;width:1px;height:21px;background:#dcdcdc"></div>
<div class="a" style="left:2283px;top:560px;width:1px;height:21px;background:#dcdcdc"></div>
<div class="a" style="left:57px;top:560px;width:1px;height:21px;background:#dcdcdc"></div>
<svg style="left:60px;top:566px" width="10" height="10"><rect x="0.5" y="0.5" width="8.5" height="8.5" rx="1" fill="#f4f4f4" stroke="#888"/><path d="M2.5 4.75 H7 M4.75 2.5 V7" stroke="#2a3a9a" stroke-width="1"/></svg>
<div class="a" style="left:90px;top:560px;width:38px;height:21px;overflow:hidden"><div class="t" style="right:1.5px;top:4.2px;font-size:12.20px;color:#000;">10</div></div>
<div class="a" style="left:146px;top:563px;width:13px;height:13px;background:#fff;border:1.4px solid #333"></div>
<div class="a" style="left:175px;top:560px;width:109px;height:21px;overflow:hidden"><div class="t" style="left:3.0px;top:5.3px;font-size:10.85px;color:#000;">ABK 865577;ABK 8...</div></div>
<div class="a" style="left:285px;top:560px;width:64px;height:21px;overflow:hidden"><div class="t" style="left:3.0px;top:4.2px;font-size:12.20px;color:#f00;">20.11.25</div></div>
<div class="a" style="left:350px;top:560px;width:64px;height:21px;overflow:hidden"><div class="t" style="left:3.0px;top:4.2px;font-size:12.20px;color:#000;">21.11.25</div></div>
<div class="a" style="left:415px;top:560px;width:139px;height:21px;overflow:hidden"><div class="t" style="left:3.0px;top:4.3px;font-size:12.05px;color:#000;text-decoration:underline;">D.W.13.1100003</div></div>
<div class="a" style="left:555px;top:560px;width:209px;height:21px;overflow:hidden"><div class="t" style="left:3.0px;top:4.1px;font-size:12.30px;color:#000;">*Dichtung-Einsatz 13 mm*</div></div>
<div class="a" style="left:765px;top:560px;width:121px;height:21px;overflow:hidden"><div class="t" style="left:3.0px;top:5.3px;font-size:10.90px;color:#000;"></div></div>
<div class="a" style="left:901px;top:563px;width:13px;height:13px;background:#fff;border:1.4px solid #333"></div>
<div class="a" style="left:958px;top:563px;width:13px;height:13px;background:#fff;border:1.4px solid #333"></div>
<div class="a" style="left:1001px;top:560px;width:79px;height:21px;overflow:hidden"><div class="t" style="right:1.5px;top:4.2px;font-size:12.20px;color:#000;">400,00</div></div>
<div class="a" style="left:1081px;top:560px;width:49px;height:21px;overflow:hidden"><div class="t" style="left:3.0px;top:4.2px;font-size:12.20px;color:#000;">Stk</div></div>
<div class="a" style="left:1131px;top:560px;width:74px;height:21px;overflow:hidden"><div class="t" style="right:1.5px;top:4.2px;font-size:12.20px;color:#000;">0,000</div></div>
<div class="a" style="left:1206px;top:560px;width:74px;height:21px;overflow:hidden"><div class="t" style="right:1.5px;top:4.2px;font-size:12.20px;color:#000;">-660,00</div></div>
<div class="a" style="left:1355px;top:560px;width:55px;height:21px;overflow:hidden"><div class="t" style="left:3.0px;top:5.9px;font-size:10.20px;color:#000;">KT1001</div></div>
<div class="a" style="left:1428px;top:563px;width:13px;height:13px;background:#fff;border:1.4px solid #333"></div>
<svg style="left:1477px;top:563px" width="17" height="14"><path d="M0.5 0.5 H12 L15.5 4 V13.5 H0.5 Z" fill="#fafafa" stroke="#d4d4d4"/><path d="M12 0.5 V4 H15.5" fill="#e4e4e4" stroke="#d4d4d4"/><text x="7.5" y="10.5" font-size="10" font-style="italic" fill="#9a9a9a" text-anchor="middle" font-family="Liberation Sans">a</text></svg>
<div class="a" style="left:1512px;top:560px;width:125px;height:21px;overflow:hidden"><div class="t" style="left:3.0px;top:4.2px;font-size:12.20px;color:#000;text-decoration:underline;">STAHL</div></div>
<div class="a" style="left:1955px;top:560px;width:105px;height:21px;overflow:hidden"><div class="t" style="right:1.5px;top:4.2px;font-size:12.20px;color:#000;">1,00</div></div>
<div class="a" style="left:2096px;top:563px;width:13px;height:13px;background:#fff;border:1.4px solid #333"></div>
<div class="a" style="left:2143px;top:560px;width:79px;height:21px;overflow:hidden"><div class="t" style="left:4.0px;top:6.7px;font-size:9.20px;color:#555;">BE25-00162</div></div>
<div class="a" style="left:2283px;top:560px;width:72px;height:21px;overflow:hidden"><div class="t" style="left:3.0px;top:6.4px;font-size:9.60px;color:#555;">ANFL25-00109</div></div>
<div class="a" style="left:57px;top:581px;width:33px;height:21px;background:#efefef"></div>
<div class="a" style="left:90px;top:581px;width:39px;height:21px;background:#efefef"></div>
<div class="a" style="left:129px;top:581px;width:46px;height:21px;background:#efefef"></div>
<div class="a" style="left:175px;top:581px;width:110px;height:21px;background:#fffee4"></div>
<div class="a" style="left:285px;top:581px;width:65px;height:21px;background:#efefef"></div>
<div class="a" style="left:350px;top:581px;width:65px;height:21px;background:#efefef"></div>
<div class="a" style="left:415px;top:581px;width:140px;height:21px;background:#efefef"></div>
<div class="a" style="left:555px;top:581px;width:210px;height:21px;background:#efefef"></div>
<div class="a" style="left:765px;top:581px;width:122px;height:21px;background:#fffee4"></div>
<div class="a" style="left:887px;top:581px;width:40px;height:21px;background:#fffee4"></div>
<div class="a" style="left:927px;top:581px;width:74px;height:21px;background:#fffee4"></div>
<div class="a" style="left:1001px;top:581px;width:80px;height:21px;background:#efefef"></div>
<div class="a" style="left:1081px;top:581px;width:50px;height:21px;background:#fffee4"></div>
<div class="a" style="left:1131px;top:581px;width:75px;height:21px;background:#fffee4"></div>
<div class="a" style="left:1206px;top:581px;width:75px;height:21px;background:#fffee4"></div>
<div class="a" style="left:1281px;top:581px;width:74px;height:21px;background:#fffee4"></div>
<div class="a" style="left:1355px;top:581px;width:56px;height:21px;background:#fffee4"></div>
<div class="a" style="left:1411px;top:581px;width:46px;height:21px;background:#efefef"></div>
<div class="a" style="left:1457px;top:581px;width:55px;height:21px;background:#c2e59c"></div>
<div class="a" style="left:1512px;top:581px;width:126px;height:21px;background:#efefef"></div>
<div class="a" style="left:1638px;top:581px;width:112px;height:21px;background:#fffee4"></div>
<div class="a" style="left:1750px;top:581px;width:28px;height:21px;background:#fffee4"></div>
<div class="a" style="left:1778px;top:581px;width:177px;height:21px;background:#fffee4"></div>
<div class="a" style="left:1955px;top:581px;width:106px;height:21px;background:#efefef"></div>
<div class="a" style="left:2061px;top:581px;width:82px;height:21px;background:#fffee4"></div>
<div class="a" style="left:2143px;top:581px;width:80px;height:21px;background:#fffee4"></div>
<div class="a" style="left:2223px;top:581px;width:60px;height:21px;background:#fffee4"></div>
<div class="a" style="left:2283px;top:581px;width:73px;height:21px;background:#fffee4"></div>
<div class="a" style="left:57px;top:601px;width:2299px;height:1px;background:#dcdcdc"></div>
<div class="a" style="left:129px;top:581px;width:1px;height:21px;background:#dcdcdc"></div>
<div class="a" style="left:175px;top:581px;width:1px;height:21px;background:#dcdcdc"></div>
<div class="a" style="left:285px;top:581px;width:1px;height:21px;background:#dcdcdc"></div>
<div class="a" style="left:350px;top:581px;width:1px;height:21px;background:#dcdcdc"></div>
<div class="a" style="left:415px;top:581px;width:1px;height:21px;background:#dcdcdc"></div>
<div class="a" style="left:555px;top:581px;width:1px;height:21px;background:#dcdcdc"></div>
<div class="a" style="left:765px;top:581px;width:1px;height:21px;background:#dcdcdc"></div>
<div class="a" style="left:887px;top:581px;width:1px;height:21px;background:#dcdcdc"></div>
<div class="a" style="left:927px;top:581px;width:1px;height:21px;background:#dcdcdc"></div>
<div class="a" style="left:1001px;top:581px;width:1px;height:21px;background:#dcdcdc"></div>
<div class="a" style="left:1081px;top:581px;width:1px;height:21px;background:#dcdcdc"></div>
<div class="a" style="left:1131px;top:581px;width:1px;height:21px;background:#dcdcdc"></div>
<div class="a" style="left:1206px;top:581px;width:1px;height:21px;background:#dcdcdc"></div>
<div class="a" style="left:1281px;top:581px;width:1px;height:21px;background:#dcdcdc"></div>
<div class="a" style="left:1355px;top:581px;width:1px;height:21px;background:#dcdcdc"></div>
<div class="a" style="left:1411px;top:581px;width:1px;height:21px;background:#dcdcdc"></div>
<div class="a" style="left:1457px;top:581px;width:1px;height:21px;background:#dcdcdc"></div>
<div class="a" style="left:1512px;top:581px;width:1px;height:21px;background:#dcdcdc"></div>
<div class="a" style="left:1638px;top:581px;width:1px;height:21px;background:#dcdcdc"></div>
<div class="a" style="left:1750px;top:581px;width:1px;height:21px;background:#dcdcdc"></div>
<div class="a" style="left:1778px;top:581px;width:1px;height:21px;background:#dcdcdc"></div>
<div class="a" style="left:1955px;top:581px;width:1px;height:21px;background:#dcdcdc"></div>
<div class="a" style="left:2061px;top:581px;width:1px;height:21px;background:#dcdcdc"></div>
<div class="a" style="left:2143px;top:581px;width:1px;height:21px;background:#dcdcdc"></div>
<div class="a" style="left:2223px;top:581px;width:1px;height:21px;background:#dcdcdc"></div>
<div class="a" style="left:2283px;top:581px;width:1px;height:21px;background:#dcdcdc"></div>
<div class="a" style="left:57px;top:581px;width:1px;height:21px;background:#dcdcdc"></div>
<svg style="left:60px;top:587px" width="10" height="10"><rect x="0.5" y="0.5" width="8.5" height="8.5" rx="1" fill="#f4f4f4" stroke="#888"/><path d="M2.5 4.75 H7 M4.75 2.5 V7" stroke="#2a3a9a" stroke-width="1"/></svg>
<div class="a" style="left:90px;top:581px;width:38px;height:21px;overflow:hidden"><div class="t" style="right:1.5px;top:4.2px;font-size:12.20px;color:#000;">30</div></div>
<div class="a" style="left:146px;top:584px;width:13px;height:13px;background:#fff;border:1.4px solid #333"></div>
<div class="a" style="left:175px;top:581px;width:109px;height:21px;overflow:hidden"><div class="t" style="left:3.0px;top:5.3px;font-size:10.85px;color:#000;">AUFTG E AG25-00...</div></div>
<div class="a" style="left:285px;top:581px;width:64px;height:21px;overflow:hidden"><div class="t" style="left:3.0px;top:4.2px;font-size:12.20px;color:#f00;">26.11.25</div></div>
<div class="a" style="left:350px;top:581px;width:64px;height:21px;overflow:hidden"><div class="t" style="left:3.0px;top:4.2px;font-size:12.20px;color:#000;">27.11.25</div></div>
<div class="a" style="left:415px;top:581px;width:139px;height:21px;overflow:hidden"><div class="t" style="left:3.0px;top:4.3px;font-size:12.05px;color:#000;text-decoration:underline;">000051.1</div></div>
<div class="a" style="left:555px;top:581px;width:209px;height:21px;overflow:hidden"><div class="t" style="left:3.0px;top:4.1px;font-size:12.30px;color:#000;">*SCHEIBE A2.2 DIN 125 GAL:ZN*</div></div>
<div class="a" style="left:765px;top:581px;width:121px;height:21px;overflow:hidden"><div class="t" style="left:3.0px;top:5.3px;font-size:10.90px;color:#000;"></div></div>
<div class="a" style="left:901px;top:584px;width:13px;height:13px;background:#fff;border:1.4px solid #333"></div>
<div class="a" style="left:958px;top:584px;width:13px;height:13px;background:#fff;border:1.4px solid #333"></div>
<div class="a" style="left:1001px;top:581px;width:79px;height:21px;overflow:hidden"><div class="t" style="right:1.5px;top:4.2px;font-size:12.20px;color:#000;">10,00</div></div>
<div class="a" style="left:1081px;top:581px;width:49px;height:21px;overflow:hidden"><div class="t" style="left:3.0px;top:4.2px;font-size:12.20px;color:#000;">Stk</div></div>
<div class="a" style="left:1131px;top:581px;width:74px;height:21px;overflow:hidden"><div class="t" style="right:1.5px;top:4.2px;font-size:12.20px;color:#000;">0,000</div></div>
<div class="a" style="left:1206px;top:581px;width:74px;height:21px;overflow:hidden"><div class="t" style="right:1.5px;top:4.2px;font-size:12.20px;color:#000;">-2,00</div></div>
<div class="a" style="left:1355px;top:581px;width:55px;height:21px;overflow:hidden"><div class="t" style="left:3.0px;top:5.9px;font-size:10.20px;color:#000;">KT1001</div></div>
<div class="a" style="left:1428px;top:584px;width:13px;height:13px;background:#fff;border:1.4px solid #333"></div>
<svg style="left:1477px;top:584px" width="17" height="14"><path d="M0.5 0.5 H12 L15.5 4 V13.5 H0.5 Z" fill="#fafafa" stroke="#d4d4d4"/><path d="M12 0.5 V4 H15.5" fill="#e4e4e4" stroke="#d4d4d4"/><text x="7.5" y="10.5" font-size="10" font-style="italic" fill="#9a9a9a" text-anchor="middle" font-family="Liberation Sans">a</text></svg>
<div class="a" style="left:1512px;top:581px;width:125px;height:21px;overflow:hidden"><div class="t" style="left:3.0px;top:4.2px;font-size:12.20px;color:#000;text-decoration:underline;">STA</div></div>
<div class="a" style="left:1955px;top:581px;width:105px;height:21px;overflow:hidden"><div class="t" style="right:1.5px;top:4.2px;font-size:12.20px;color:#000;">1,00</div></div>
<div class="a" style="left:2096px;top:584px;width:13px;height:13px;background:#fff;border:1.4px solid #333"></div>
<div class="a" style="left:57px;top:602px;width:33px;height:21px;background:#ffffff"></div>
<div class="a" style="left:90px;top:602px;width:39px;height:21px;background:#ffffff"></div>
<div class="a" style="left:129px;top:602px;width:46px;height:21px;background:#ffffff"></div>
<div class="a" style="left:175px;top:602px;width:110px;height:21px;background:#fffee4"></div>
<div class="a" style="left:285px;top:602px;width:65px;height:21px;background:#ffffff"></div>
<div class="a" style="left:350px;top:602px;width:65px;height:21px;background:#ffffff"></div>
<div class="a" style="left:415px;top:602px;width:140px;height:21px;background:#ffffff"></div>
<div class="a" style="left:555px;top:602px;width:210px;height:21px;background:#ffffff"></div>
<div class="a" style="left:765px;top:602px;width:122px;height:21px;background:#fffee4"></div>
<div class="a" style="left:887px;top:602px;width:40px;height:21px;background:#fffee4"></div>
<div class="a" style="left:927px;top:602px;width:74px;height:21px;background:#fffee4"></div>
<div class="a" style="left:1001px;top:602px;width:80px;height:21px;background:#ffffff"></div>
<div class="a" style="left:1081px;top:602px;width:50px;height:21px;background:#fffee4"></div>
<div class="a" style="left:1131px;top:602px;width:75px;height:21px;background:#fffee4"></div>
<div class="a" style="left:1206px;top:602px;width:75px;height:21px;background:#fffee4"></div>
<div class="a" style="left:1281px;top:602px;width:74px;height:21px;background:#fffee4"></div>
<div class="a" style="left:1355px;top:602px;width:56px;height:21px;background:#fffee4"></div>
<div class="a" style="left:1411px;top:602px;width:46px;height:21px;background:#ffffff"></div>
<div class="a" style="left:1457px;top:602px;width:55px;height:21px;background:#c2e59c"></div>
<div class="a" style="left:1512px;top:602px;width:126px;height:21px;background:#ffffff"></div>
<div class="a" style="left:1638px;top:602px;width:112px;height:21px;background:#fffee4"></div>
<div class="a" style="left:1750px;top:602px;width:28px;height:21px;background:#fffee4"></div>
<div class="a" style="left:1778px;top:602px;width:177px;height:21px;background:#fffee4"></div>
<div class="a" style="left:1955px;top:602px;width:106px;height:21px;background:#ffffff"></div>
<div class="a" style="left:2061px;top:602px;width:82px;height:21px;background:#fffee4"></div>
<div class="a" style="left:2143px;top:602px;width:80px;height:21px;background:#fffee4"></div>
<div class="a" style="left:2223px;top:602px;width:60px;height:21px;background:#fffee4"></div>
<div class="a" style="left:2283px;top:602px;width:73px;height:21px;background:#fffee4"></div>
<div class="a" style="left:57px;top:622px;width:2299px;height:1px;background:#dcdcdc"></div>
<div class="a" style="left:129px;top:602px;width:1px;height:21px;background:#dcdcdc"></div>
<div class="a" style="left:175px;top:602px;width:1px;height:21px;background:#dcdcdc"></div>
<div class="a" style="left:285px;top:602px;width:1px;height:21px;background:#dcdcdc"></div>
<div class="a" style="left:350px;top:602px;width:1px;height:21px;background:#dcdcdc"></div>
<div class="a" style="left:415px;top:602px;width:1px;height:21px;background:#dcdcdc"></div>
<div class="a" style="left:555px;top:602px;width:1px;height:21px;background:#dcdcdc"></div>
<div class="a" style="left:765px;top:602px;width:1px;height:21px;background:#dcdcdc"></div>
<div class="a" style="left:887px;top:602px;width:1px;height:21px;background:#dcdcdc"></div>
<div class="a" style="left:927px;top:602px;width:1px;height:21px;background:#dcdcdc"></div>
<div class="a" style="left:1001px;top:602px;width:1px;height:21px;background:#dcdcdc"></div>
<div class="a" style="left:1081px;top:602px;width:1px;height:21px;background:#dcdcdc"></div>
<div class="a" style="left:1131px;top:602px;width:1px;height:21px;background:#dcdcdc"></div>
<div class="a" style="left:1206px;top:602px;width:1px;height:21px;background:#dcdcdc"></div>
<div class="a" style="left:1281px;top:602px;width:1px;height:21px;background:#dcdcdc"></div>
<div class="a" style="left:1355px;top:602px;width:1px;height:21px;background:#dcdcdc"></div>
<div class="a" style="left:1411px;top:602px;width:1px;height:21px;background:#dcdcdc"></div>
<div class="a" style="left:1457px;top:602px;width:1px;height:21px;background:#dcdcdc"></div>
<div class="a" style="left:1512px;top:602px;width:1px;height:21px;background:#dcdcdc"></div>
<div class="a" style="left:1638px;top:602px;width:1px;height:21px;background:#dcdcdc"></div>
<div class="a" style="left:1750px;top:602px;width:1px;height:21px;background:#dcdcdc"></div>
<div class="a" style="left:1778px;top:602px;width:1px;height:21px;background:#dcdcdc"></div>
<div class="a" style="left:1955px;top:602px;width:1px;height:21px;background:#dcdcdc"></div>
<div class="a" style="left:2061px;top:602px;width:1px;height:21px;background:#dcdcdc"></div>
<div class="a" style="left:2143px;top:602px;width:1px;height:21px;background:#dcdcdc"></div>
<div class="a" style="left:2223px;top:602px;width:1px;height:21px;background:#dcdcdc"></div>
<div class="a" style="left:2283px;top:602px;width:1px;height:21px;background:#dcdcdc"></div>
<div class="a" style="left:57px;top:602px;width:1px;height:21px;background:#dcdcdc"></div>
<svg style="left:60px;top:608px" width="10" height="10"><rect x="0.5" y="0.5" width="8.5" height="8.5" rx="1" fill="#f4f4f4" stroke="#888"/><path d="M2.5 4.75 H7 M4.75 2.5 V7" stroke="#2a3a9a" stroke-width="1"/></svg>
<div class="a" style="left:90px;top:602px;width:38px;height:21px;overflow:hidden"><div class="t" style="right:1.5px;top:4.2px;font-size:12.20px;color:#000;">70</div></div>
<div class="a" style="left:146px;top:605px;width:13px;height:13px;background:#fff;border:1.4px solid #333"></div>
<div class="a" style="left:175px;top:602px;width:109px;height:21px;overflow:hidden"><div class="t" style="left:3.0px;top:5.3px;font-size:10.85px;color:#000;">ABK 865577;ABK 8...</div></div>
<div class="a" style="left:285px;top:602px;width:64px;height:21px;overflow:hidden"><div class="t" style="left:3.0px;top:4.2px;font-size:12.20px;color:#f00;">03.10.25</div></div>
<div class="a" style="left:350px;top:602px;width:64px;height:21px;overflow:hidden"><div class="t" style="left:3.0px;top:4.2px;font-size:12.20px;color:#000;">27.11.25</div></div>
<div class="a" style="left:415px;top:602px;width:139px;height:21px;overflow:hidden"><div class="t" style="left:3.0px;top:4.3px;font-size:12.05px;color:#000;text-decoration:underline;">D.W.13.1100002</div></div>
<div class="a" style="left:555px;top:602px;width:209px;height:21px;overflow:hidden"><div class="t" style="left:3.0px;top:4.1px;font-size:12.30px;color:#000;">*Dichtung 13 mm*</div></div>
<div class="a" style="left:765px;top:602px;width:121px;height:21px;overflow:hidden"><div class="t" style="left:3.0px;top:5.3px;font-size:10.90px;color:#000;"></div></div>
<div class="a" style="left:901px;top:605px;width:13px;height:13px;background:#fff;border:1.4px solid #333"></div>
<div class="a" style="left:958px;top:605px;width:13px;height:13px;background:#fff;border:1.4px solid #333"></div>
<div class="a" style="left:1001px;top:602px;width:79px;height:21px;overflow:hidden"><div class="t" style="right:1.5px;top:4.2px;font-size:12.20px;color:#000;">432,00</div></div>
<div class="a" style="left:1081px;top:602px;width:49px;height:21px;overflow:hidden"><div class="t" style="left:3.0px;top:4.2px;font-size:12.20px;color:#000;">Stk</div></div>
<div class="a" style="left:1131px;top:602px;width:74px;height:21px;overflow:hidden"><div class="t" style="right:1.5px;top:4.2px;font-size:12.20px;color:#000;">0,000</div></div>
<div class="a" style="left:1206px;top:602px;width:74px;height:21px;overflow:hidden"><div class="t" style="right:1.5px;top:4.2px;font-size:12.20px;color:#000;">-652,00</div></div>
<div class="a" style="left:1355px;top:602px;width:55px;height:21px;overflow:hidden"><div class="t" style="left:3.0px;top:5.9px;font-size:10.20px;color:#000;">KT1001</div></div>
<div class="a" style="left:1428px;top:605px;width:13px;height:13px;background:#fff;border:1.4px solid #333"></div>
<svg style="left:1477px;top:605px" width="17" height="14"><path d="M0.5 0.5 H12 L15.5 4 V13.5 H0.5 Z" fill="#fafafa" stroke="#d4d4d4"/><path d="M12 0.5 V4 H15.5" fill="#e4e4e4" stroke="#d4d4d4"/><text x="7.5" y="10.5" font-size="10" font-style="italic" fill="#9a9a9a" text-anchor="middle" font-family="Liberation Sans">a</text></svg>
<div class="a" style="left:1512px;top:602px;width:125px;height:21px;overflow:hidden"><div class="t" style="left:3.0px;top:4.2px;font-size:12.20px;color:#000;text-decoration:underline;">STAHL</div></div>
<div class="a" style="left:1955px;top:602px;width:105px;height:21px;overflow:hidden"><div class="t" style="right:1.5px;top:4.2px;font-size:12.20px;color:#000;">1,00</div></div>
<div class="a" style="left:2096px;top:605px;width:13px;height:13px;background:#fff;border:1.4px solid #333"></div>
<div class="a" style="left:2143px;top:602px;width:79px;height:21px;overflow:hidden"><div class="t" style="left:4.0px;top:6.7px;font-size:9.20px;color:#555;">BE25-00162</div></div>
<div class="a" style="left:2283px;top:602px;width:72px;height:21px;overflow:hidden"><div class="t" style="left:3.0px;top:6.4px;font-size:9.60px;color:#555;">ANFL25-00109</div></div>
<div class="a" style="left:57px;top:623px;width:33px;height:21px;background:#efefef"></div>
<div class="a" style="left:90px;top:623px;width:39px;height:21px;background:#efefef"></div>
<div class="a" style="left:129px;top:623px;width:46px;height:21px;background:#efefef"></div>
<div class="a" style="left:175px;top:623px;width:110px;height:21px;background:#fffee4"></div>
<div class="a" style="left:285px;top:623px;width:65px;height:21px;background:#efefef"></div>
<div class="a" style="left:350px;top:623px;width:65px;height:21px;background:#efefef"></div>
<div class="a" style="left:415px;top:623px;width:140px;height:21px;background:#efefef"></div>
<div class="a" style="left:555px;top:623px;width:210px;height:21px;background:#efefef"></div>
<div class="a" style="left:765px;top:623px;width:122px;height:21px;background:#fffee4"></div>
<div class="a" style="left:887px;top:623px;width:40px;height:21px;background:#fffee4"></div>
<div class="a" style="left:927px;top:623px;width:74px;height:21px;background:#fffee4"></div>
<div class="a" style="left:1001px;top:623px;width:80px;height:21px;background:#efefef"></div>
<div class="a" style="left:1081px;top:623px;width:50px;height:21px;background:#fffee4"></div>
<div class="a" style="left:1131px;top:623px;width:75px;height:21px;background:#fffee4"></div>
<div class="a" style="left:1206px;top:623px;width:75px;height:21px;background:#fffee4"></div>
<div class="a" style="left:1281px;top:623px;width:74px;height:21px;background:#fffee4"></div>
<div class="a" style="left:1355px;top:623px;width:56px;height:21px;background:#fffee4"></div>
<div class="a" style="left:1411px;top:623px;width:46px;height:21px;background:#efefef"></div>
<div class="a" style="left:1457px;top:623px;width:55px;height:21px;background:#c2e59c"></div>
<div class="a" style="left:1512px;top:623px;width:126px;height:21px;background:#efefef"></div>
<div class="a" style="left:1638px;top:623px;width:112px;height:21px;background:#fffee4"></div>
<div class="a" style="left:1750px;top:623px;width:28px;height:21px;background:#fffee4"></div>
<div class="a" style="left:1778px;top:623px;width:177px;height:21px;background:#fffee4"></div>
<div class="a" style="left:1955px;top:623px;width:106px;height:21px;background:#efefef"></div>
<div class="a" style="left:2061px;top:623px;width:82px;height:21px;background:#fffee4"></div>
<div class="a" style="left:2143px;top:623px;width:80px;height:21px;background:#fffee4"></div>
<div class="a" style="left:2223px;top:623px;width:60px;height:21px;background:#fffee4"></div>
<div class="a" style="left:2283px;top:623px;width:73px;height:21px;background:#fffee4"></div>
<div class="a" style="left:57px;top:643px;width:2299px;height:1px;background:#dcdcdc"></div>
<div class="a" style="left:129px;top:623px;width:1px;height:21px;background:#dcdcdc"></div>
<div class="a" style="left:175px;top:623px;width:1px;height:21px;background:#dcdcdc"></div>
<div class="a" style="left:285px;top:623px;width:1px;height:21px;background:#dcdcdc"></div>
<div class="a" style="left:350px;top:623px;width:1px;height:21px;background:#dcdcdc"></div>
<div class="a" style="left:415px;top:623px;width:1px;height:21px;background:#dcdcdc"></div>
<div class="a" style="left:555px;top:623px;width:1px;height:21px;background:#dcdcdc"></div>
<div class="a" style="left:765px;top:623px;width:1px;height:21px;background:#dcdcdc"></div>
<div class="a" style="left:887px;top:623px;width:1px;height:21px;background:#dcdcdc"></div>
<div class="a" style="left:927px;top:623px;width:1px;height:21px;background:#dcdcdc"></div>
<div class="a" style="left:1001px;top:623px;width:1px;height:21px;background:#dcdcdc"></div>
<div class="a" style="left:1081px;top:623px;width:1px;height:21px;background:#dcdcdc"></div>
<div class="a" style="left:1131px;top:623px;width:1px;height:21px;background:#dcdcdc"></div>
<div class="a" style="left:1206px;top:623px;width:1px;height:21px;background:#dcdcdc"></div>
<div class="a" style="left:1281px;top:623px;width:1px;height:21px;background:#dcdcdc"></div>
<div class="a" style="left:1355px;top:623px;width:1px;height:21px;background:#dcdcdc"></div>
<div class="a" style="left:1411px;top:623px;width:1px;height:21px;background:#dcdcdc"></div>
<div class="a" style="left:1457px;top:623px;width:1px;height:21px;background:#dcdcdc"></div>
<div class="a" style="left:1512px;top:623px;width:1px;height:21px;background:#dcdcdc"></div>
<div class="a" style="left:1638px;top:623px;width:1px;height:21px;background:#dcdcdc"></div>
<div class="a" style="left:1750px;top:623px;width:1px;height:21px;background:#dcdcdc"></div>
<div class="a" style="left:1778px;top:623px;width:1px;height:21px;background:#dcdcdc"></div>
<div class="a" style="left:1955px;top:623px;width:1px;height:21px;background:#dcdcdc"></div>
<div class="a" style="left:2061px;top:623px;width:1px;height:21px;background:#dcdcdc"></div>
<div class="a" style="left:2143px;top:623px;width:1px;height:21px;background:#dcdcdc"></div>
<div class="a" style="left:2223px;top:623px;width:1px;height:21px;background:#dcdcdc"></div>
<div class="a" style="left:2283px;top:623px;width:1px;height:21px;background:#dcdcdc"></div>
<div class="a" style="left:57px;top:623px;width:1px;height:21px;background:#dcdcdc"></div>
<svg style="left:60px;top:629px" width="10" height="10"><rect x="0.5" y="0.5" width="8.5" height="8.5" rx="1" fill="#f4f4f4" stroke="#888"/><path d="M2.5 4.75 H7 M4.75 2.5 V7" stroke="#2a3a9a" stroke-width="1"/></svg>
<div class="a" style="left:90px;top:623px;width:38px;height:21px;overflow:hidden"><div class="t" style="right:1.5px;top:4.2px;font-size:12.20px;color:#000;">130</div></div>
<div class="a" style="left:146px;top:626px;width:13px;height:13px;background:#fff;border:1.4px solid #333"></div>
<div class="a" style="left:175px;top:623px;width:109px;height:21px;overflow:hidden"><div class="t" style="left:3.0px;top:5.3px;font-size:10.85px;color:#000;">ABK 865459;ABK 8...</div></div>
<div class="a" style="left:285px;top:623px;width:64px;height:21px;overflow:hidden"><div class="t" style="left:3.0px;top:4.2px;font-size:12.20px;color:#f00;">31.10.25</div></div>
<div class="a" style="left:350px;top:623px;width:64px;height:21px;overflow:hidden"><div class="t" style="left:3.0px;top:4.2px;font-size:12.20px;color:#000;">28.11.25</div></div>
<div class="a" style="left:415px;top:623px;width:139px;height:21px;overflow:hidden"><div class="t" style="left:3.0px;top:4.3px;font-size:12.05px;color:#000;text-decoration:underline;">1.2210 Ø14X1000</div></div>
<div class="a" style="left:555px;top:623px;width:209px;height:21px;overflow:hidden"><div class="t" style="left:3.0px;top:4.1px;font-size:12.30px;color:#000;">*Silberstahl Rundstange / Welle DI...</div></div>
<div class="a" style="left:765px;top:623px;width:121px;height:21px;overflow:hidden"><div class="t" style="left:3.0px;top:5.3px;font-size:10.90px;color:#000;">Ø 14x1000</div></div>
<div class="a" style="left:901px;top:626px;width:13px;height:13px;background:#fff;border:1.4px solid #333"></div>
<div class="a" style="left:958px;top:626px;width:13px;height:13px;background:#fff;border:1.4px solid #333"></div>
<div class="a" style="left:1001px;top:623px;width:79px;height:21px;overflow:hidden"><div class="t" style="right:1.5px;top:4.2px;font-size:12.20px;color:#000;">1.584,00</div></div>
<div class="a" style="left:1081px;top:623px;width:49px;height:21px;overflow:hidden"><div class="t" style="left:3.0px;top:4.2px;font-size:12.20px;color:#000;">m</div></div>
<div class="a" style="left:1131px;top:623px;width:74px;height:21px;overflow:hidden"><div class="t" style="right:1.5px;top:4.2px;font-size:12.20px;color:#000;">344,000</div></div>
<div class="a" style="left:1206px;top:623px;width:74px;height:21px;overflow:hidden"><div class="t" style="right:1.5px;top:4.2px;font-size:12.20px;color:#000;">-2.835,89</div></div>
<div class="a" style="left:1355px;top:623px;width:55px;height:21px;overflow:hidden"><div class="t" style="left:3.0px;top:5.9px;font-size:10.20px;color:#000;">RM1001</div></div>
<div class="a" style="left:1428px;top:626px;width:13px;height:13px;background:#fff;border:1.4px solid #333"></div><svg style="left:1428px;top:626px" width="13" height="13"><path d="M2.5 6.5 L5.2 9.2 L10.5 3.3" fill="none" stroke="#222" stroke-width="1.3"/></svg>
<svg style="left:1477px;top:626px" width="17" height="14"><path d="M0.5 0.5 H12 L15.5 4 V13.5 H0.5 Z" fill="#fafafa" stroke="#d4d4d4"/><path d="M12 0.5 V4 H15.5" fill="#e4e4e4" stroke="#d4d4d4"/><text x="7.5" y="10.5" font-size="10" font-style="italic" fill="#9a9a9a" text-anchor="middle" font-family="Liberation Sans">a</text></svg>
<div class="a" style="left:1512px;top:623px;width:125px;height:21px;overflow:hidden"><div class="t" style="left:3.0px;top:4.2px;font-size:12.20px;color:#000;text-decoration:underline;">STAHL</div></div>
<div class="a" style="left:1955px;top:623px;width:105px;height:21px;overflow:hidden"><div class="t" style="right:1.5px;top:4.2px;font-size:12.20px;color:#000;">1,00</div></div>
<div class="a" style="left:2096px;top:626px;width:13px;height:13px;background:#fff;border:1.4px solid #333"></div>
<div class="a" style="left:2143px;top:623px;width:79px;height:21px;overflow:hidden"><div class="t" style="left:4.0px;top:6.7px;font-size:9.20px;color:#555;">BE25-00160;BE25-00</div></div>
<div class="a" style="left:57px;top:644px;width:33px;height:21px;background:#ffffff"></div>
<div class="a" style="left:90px;top:644px;width:39px;height:21px;background:#ffffff"></div>
<div class="a" style="left:129px;top:644px;width:46px;height:21px;background:#ffffff"></div>
<div class="a" style="left:175px;top:644px;width:110px;height:21px;background:#fffee4"></div>
<div class="a" style="left:285px;top:644px;width:65px;height:21px;background:#ffffff"></div>
<div class="a" style="left:350px;top:644px;width:65px;height:21px;background:#ffffff"></div>
<div class="a" style="left:415px;top:644px;width:140px;height:21px;background:#ffffff"></div>
<div class="a" style="left:555px;top:644px;width:210px;height:21px;background:#ffffff"></div>
<div class="a" style="left:765px;top:644px;width:122px;height:21px;background:#fffee4"></div>
<div class="a" style="left:887px;top:644px;width:40px;height:21px;background:#fffee4"></div>
<div class="a" style="left:927px;top:644px;width:74px;height:21px;background:#fffee4"></div>
<div class="a" style="left:1001px;top:644px;width:80px;height:21px;background:#ffffff"></div>
<div class="a" style="left:1081px;top:644px;width:50px;height:21px;background:#fffee4"></div>
<div class="a" style="left:1131px;top:644px;width:75px;height:21px;background:#fffee4"></div>
<div class="a" style="left:1206px;top:644px;width:75px;height:21px;background:#fffee4"></div>
<div class="a" style="left:1281px;top:644px;width:74px;height:21px;background:#fffee4"></div>
<div class="a" style="left:1355px;top:644px;width:56px;height:21px;background:#fffee4"></div>
<div class="a" style="left:1411px;top:644px;width:46px;height:21px;background:#ffffff"></div>
<div class="a" style="left:1457px;top:644px;width:55px;height:21px;background:#c2e59c"></div>
<div class="a" style="left:1512px;top:644px;width:126px;height:21px;background:#ffffff"></div>
<div class="a" style="left:1638px;top:644px;width:112px;height:21px;background:#fffee4"></div>
<div class="a" style="left:1750px;top:644px;width:28px;height:21px;background:#fffee4"></div>
<div class="a" style="left:1778px;top:644px;width:177px;height:21px;background:#fffee4"></div>
<div class="a" style="left:1955px;top:644px;width:106px;height:21px;background:#ffffff"></div>
<div class="a" style="left:2061px;top:644px;width:82px;height:21px;background:#fffee4"></div>
<div class="a" style="left:2143px;top:644px;width:80px;height:21px;background:#fffee4"></div>
<div class="a" style="left:2223px;top:644px;width:60px;height:21px;background:#fffee4"></div>
<div class="a" style="left:2283px;top:644px;width:73px;height:21px;background:#fffee4"></div>
<div class="a" style="left:57px;top:664px;width:2299px;height:1px;background:#dcdcdc"></div>
<div class="a" style="left:129px;top:644px;width:1px;height:21px;background:#dcdcdc"></div>
<div class="a" style="left:175px;top:644px;width:1px;height:21px;background:#dcdcdc"></div>
<div class="a" style="left:285px;top:644px;width:1px;height:21px;background:#dcdcdc"></div>
<div class="a" style="left:350px;top:644px;width:1px;height:21px;background:#dcdcdc"></div>
<div class="a" style="left:415px;top:644px;width:1px;height:21px;background:#dcdcdc"></div>
<div class="a" style="left:555px;top:644px;width:1px;height:21px;background:#dcdcdc"></div>
<div class="a" style="left:765px;top:644px;width:1px;height:21px;background:#dcdcdc"></div>
<div class="a" style="left:887px;top:644px;width:1px;height:21px;background:#dcdcdc"></div>
<div class="a" style="left:927px;top:644px;width:1px;height:21px;background:#dcdcdc"></div>
<div class="a" style="left:1001px;top:644px;width:1px;height:21px;background:#dcdcdc"></div>
<div class="a" style="left:1081px;top:644px;width:1px;height:21px;background:#dcdcdc"></div>
<div class="a" style="left:1131px;top:644px;width:1px;height:21px;background:#dcdcdc"></div>
<div class="a" style="left:1206px;top:644px;width:1px;height:21px;background:#dcdcdc"></div>
<div class="a" style="left:1281px;top:644px;width:1px;height:21px;background:#dcdcdc"></div>
<div class="a" style="left:1355px;top:644px;width:1px;height:21px;background:#dcdcdc"></div>
<div class="a" style="left:1411px;top:644px;width:1px;height:21px;background:#dcdcdc"></div>
<div class="a" style="left:1457px;top:644px;width:1px;height:21px;background:#dcdcdc"></div>
<div class="a" style="left:1512px;top:644px;width:1px;height:21px;background:#dcdcdc"></div>
<div class="a" style="left:1638px;top:644px;width:1px;height:21px;background:#dcdcdc"></div>
<div class="a" style="left:1750px;top:644px;width:1px;height:21px;background:#dcdcdc"></div>
<div class="a" style="left:1778px;top:644px;width:1px;height:21px;background:#dcdcdc"></div>
<div class="a" style="left:1955px;top:644px;width:1px;height:21px;background:#dcdcdc"></div>
<div class="a" style="left:2061px;top:644px;width:1px;height:21px;background:#dcdcdc"></div>
<div class="a" style="left:2143px;top:644px;width:1px;height:21px;background:#dcdcdc"></div>
<div class="a" style="left:2223px;top:644px;width:1px;height:21px;background:#dcdcdc"></div>
<div class="a" style="left:2283px;top:644px;width:1px;height:21px;background:#dcdcdc"></div>
<div class="a" style="left:57px;top:644px;width:1px;height:21px;background:#dcdcdc"></div>
<svg style="left:60px;top:650px" width="10" height="10"><rect x="0.5" y="0.5" width="8.5" height="8.5" rx="1" fill="#f4f4f4" stroke="#888"/><path d="M2.5 4.75 H7 M4.75 2.5 V7" stroke="#2a3a9a" stroke-width="1"/></svg>
<div class="a" style="left:90px;top:644px;width:38px;height:21px;overflow:hidden"><div class="t" style="right:1.5px;top:4.2px;font-size:12.20px;color:#000;">150</div></div>
<div class="a" style="left:146px;top:647px;width:13px;height:13px;background:#fff;border:1.4px solid #333"></div>
<div class="a" style="left:175px;top:644px;width:109px;height:21px;overflow:hidden"><div class="t" style="left:3.0px;top:5.3px;font-size:10.85px;color:#000;">ABK 865552;ABK 8...</div></div>
<div class="a" style="left:285px;top:644px;width:64px;height:21px;overflow:hidden"><div class="t" style="left:3.0px;top:4.2px;font-size:12.20px;color:#f00;">24.10.25</div></div>
<div class="a" style="left:350px;top:644px;width:64px;height:21px;overflow:hidden"><div class="t" style="left:3.0px;top:4.2px;font-size:12.20px;color:#000;">05.12.25</div></div>
<div class="a" style="left:415px;top:644px;width:139px;height:21px;overflow:hidden"><div class="t" style="left:3.0px;top:4.3px;font-size:12.05px;color:#000;text-decoration:underline;">E.B.PKW.A-1168534-0...</div></div>
<div class="a" style="left:555px;top:644px;width:209px;height:21px;overflow:hidden"><div class="t" style="left:3.0px;top:4.1px;font-size:12.30px;color:#000;">*Platine Ansteuerung eine Sensorei...</div></div>
<div class="a" style="left:765px;top:644px;width:121px;height:21px;overflow:hidden"><div class="t" style="left:3.0px;top:5.3px;font-size:10.90px;color:#000;"></div></div>
<div class="a" style="left:901px;top:647px;width:13px;height:13px;background:#fff;border:1.4px solid #333"></div>
<div class="a" style="left:958px;top:647px;width:13px;height:13px;background:#fff;border:1.4px solid #333"></div>
<div class="a" style="left:1001px;top:644px;width:79px;height:21px;overflow:hidden"><div class="t" style="right:1.5px;top:4.2px;font-size:12.20px;color:#000;">243,00</div></div>
<div class="a" style="left:1081px;top:644px;width:49px;height:21px;overflow:hidden"><div class="t" style="left:3.0px;top:4.2px;font-size:12.20px;color:#000;">Stk</div></div>
<div class="a" style="left:1131px;top:644px;width:74px;height:21px;overflow:hidden"><div class="t" style="right:1.5px;top:4.2px;font-size:12.20px;color:#000;">13,000</div></div>
<div class="a" style="left:1206px;top:644px;width:74px;height:21px;overflow:hidden"><div class="t" style="right:1.5px;top:4.2px;font-size:12.20px;color:#000;">-243,00</div></div>
<div class="a" style="left:1281px;top:644px;width:73px;height:21px;overflow:hidden"><div class="t" style="right:1.5px;top:4.2px;font-size:12.20px;color:#000;">20,00</div></div>
<div class="a" style="left:1355px;top:644px;width:55px;height:21px;overflow:hidden"><div class="t" style="left:3.0px;top:5.9px;font-size:10.20px;color:#000;">KT1001</div></div>
<div class="a" style="left:1428px;top:647px;width:13px;height:13px;background:#fff;border:1.4px solid #333"></div>
<svg style="left:1477px;top:647px" width="17" height="14"><path d="M0.5 0.5 H12 L15.5 4 V13.5 H0.5 Z" fill="#fafafa" stroke="#d4d4d4"/><path d="M12 0.5 V4 H15.5" fill="#e4e4e4" stroke="#d4d4d4"/><text x="7.5" y="10.5" font-size="10" font-style="italic" fill="#9a9a9a" text-anchor="middle" font-family="Liberation Sans">a</text></svg>
<div class="a" style="left:1512px;top:644px;width:125px;height:21px;overflow:hidden"><div class="t" style="left:3.0px;top:4.2px;font-size:12.20px;color:#000;text-decoration:underline;">ELEKTR</div></div>
<div class="a" style="left:1955px;top:644px;width:105px;height:21px;overflow:hidden"><div class="t" style="right:1.5px;top:4.2px;font-size:12.20px;color:#000;">1,00</div></div>
<div class="a" style="left:2096px;top:647px;width:13px;height:13px;background:#fff;border:1.4px solid #333"></div>
<div class="a" style="left:2143px;top:644px;width:79px;height:21px;overflow:hidden"><div class="t" style="left:4.0px;top:6.7px;font-size:9.20px;color:#555;">BE25-00157;FBE2</div></div>
<div class="a" style="left:57px;top:665px;width:33px;height:21px;background:#efefef"></div>
<div class="a" style="left:90px;top:665px;width:39px;height:21px;background:#efefef"></div>
<div class="a" style="left:129px;top:665px;width:46px;height:21px;background:#efefef"></div>
<div class="a" style="left:175px;top:665px;width:110px;height:21px;background:#fffee4"></div>
<div class="a" style="left:285px;top:665px;width:65px;height:21px;background:#efefef"></div>
<div class="a" style="left:350px;top:665px;width:65px;height:21px;background:#efefef"></div>
<div class="a" style="left:415px;top:665px;width:140px;height:21px;background:#efefef"></div>
<div class="a" style="left:555px;top:665px;width:210px;height:21px;background:#efefef"></div>
<div class="a" style="left:765px;top:665px;width:122px;height:21px;background:#fffee4"></div>
<div class="a" style="left:887px;top:665px;width:40px;height:21px;background:#fffee4"></div>
<div class="a" style="left:927px;top:665px;width:74px;height:21px;background:#fffee4"></div>
<div class="a" style="left:1001px;top:665px;width:80px;height:21px;background:#efefef"></div>
<div class="a" style="left:1081px;top:665px;width:50px;height:21px;background:#fffee4"></div>
<div class="a" style="left:1131px;top:665px;width:75px;height:21px;background:#fffee4"></div>
<div class="a" style="left:1206px;top:665px;width:75px;height:21px;background:#fffee4"></div>
<div class="a" style="left:1281px;top:665px;width:74px;height:21px;background:#fffee4"></div>
<div class="a" style="left:1355px;top:665px;width:56px;height:21px;background:#fffee4"></div>
<div class="a" style="left:1411px;top:665px;width:46px;height:21px;background:#efefef"></div>
<div class="a" style="left:1457px;top:665px;width:55px;height:21px;background:#c2e59c"></div>
<div class="a" style="left:1512px;top:665px;width:126px;height:21px;background:#efefef"></div>
<div class="a" style="left:1638px;top:665px;width:112px;height:21px;background:#fffee4"></div>
<div class="a" style="left:1750px;top:665px;width:28px;height:21px;background:#fffee4"></div>
<div class="a" style="left:1778px;top:665px;width:177px;height:21px;background:#fffee4"></div>
<div class="a" style="left:1955px;top:665px;width:106px;height:21px;background:#efefef"></div>
<div class="a" style="left:2061px;top:665px;width:82px;height:21px;background:#fffee4"></div>
<div class="a" style="left:2143px;top:665px;width:80px;height:21px;background:#fffee4"></div>
<div class="a" style="left:2223px;top:665px;width:60px;height:21px;background:#fffee4"></div>
<div class="a" style="left:2283px;top:665px;width:73px;height:21px;background:#fffee4"></div>
<div class="a" style="left:57px;top:685px;width:2299px;height:1px;background:#dcdcdc"></div>
<div class="a" style="left:129px;top:665px;width:1px;height:21px;background:#dcdcdc"></div>
<div class="a" style="left:175px;top:665px;width:1px;height:21px;background:#dcdcdc"></div>
<div class="a" style="left:285px;top:665px;width:1px;height:21px;background:#dcdcdc"></div>
<div class="a" style="left:350px;top:665px;width:1px;height:21px;background:#dcdcdc"></div>
<div class="a" style="left:415px;top:665px;width:1px;height:21px;background:#dcdcdc"></div>
<div class="a" style="left:555px;top:665px;width:1px;height:21px;background:#dcdcdc"></div>
<div class="a" style="left:765px;top:665px;width:1px;height:21px;background:#dcdcdc"></div>
<div class="a" style="left:887px;top:665px;width:1px;height:21px;background:#dcdcdc"></div>
<div class="a" style="left:927px;top:665px;width:1px;height:21px;background:#dcdcdc"></div>
<div class="a" style="left:1001px;top:665px;width:1px;height:21px;background:#dcdcdc"></div>
<div class="a" style="left:1081px;top:665px;width:1px;height:21px;background:#dcdcdc"></div>
<div class="a" style="left:1131px;top:665px;width:1px;height:21px;background:#dcdcdc"></div>
<div class="a" style="left:1206px;top:665px;width:1px;height:21px;background:#dcdcdc"></div>
<div class="a" style="left:1281px;top:665px;width:1px;height:21px;background:#dcdcdc"></div>
<div class="a" style="left:1355px;top:665px;width:1px;height:21px;background:#dcdcdc"></div>
<div class="a" style="left:1411px;top:665px;width:1px;height:21px;background:#dcdcdc"></div>
<div class="a" style="left:1457px;top:665px;width:1px;height:21px;background:#dcdcdc"></div>
<div class="a" style="left:1512px;top:665px;width:1px;height:21px;background:#dcdcdc"></div>
<div class="a" style="left:1638px;top:665px;width:1px;height:21px;background:#dcdcdc"></div>
<div class="a" style="left:1750px;top:665px;width:1px;height:21px;background:#dcdcdc"></div>
<div class="a" style="left:1778px;top:665px;width:1px;height:21px;background:#dcdcdc"></div>
<div class="a" style="left:1955px;top:665px;width:1px;height:21px;background:#dcdcdc"></div>
<div class="a" style="left:2061px;top:665px;width:1px;height:21px;background:#dcdcdc"></div>
<div class="a" style="left:2143px;top:665px;width:1px;height:21px;background:#dcdcdc"></div>
<div class="a" style="left:2223px;top:665px;width:1px;height:21px;background:#dcdcdc"></div>
<div class="a" style="left:2283px;top:665px;width:1px;height:21px;background:#dcdcdc"></div>
<div class="a" style="left:57px;top:665px;width:1px;height:21px;background:#dcdcdc"></div>
<svg style="left:60px;top:671px" width="10" height="10"><rect x="0.5" y="0.5" width="8.5" height="8.5" rx="1" fill="#f4f4f4" stroke="#888"/><path d="M2.5 4.75 H7 M4.75 2.5 V7" stroke="#2a3a9a" stroke-width="1"/></svg>
<div class="a" style="left:90px;top:665px;width:38px;height:21px;overflow:hidden"><div class="t" style="right:1.5px;top:4.2px;font-size:12.20px;color:#000;">160</div></div>
<div class="a" style="left:146px;top:668px;width:13px;height:13px;background:#fff;border:1.4px solid #333"></div>
<div class="a" style="left:175px;top:665px;width:109px;height:21px;overflow:hidden"><div class="t" style="left:3.0px;top:5.3px;font-size:10.85px;color:#000;">ABK 865589</div></div>
<div class="a" style="left:285px;top:665px;width:64px;height:21px;overflow:hidden"><div class="t" style="left:3.0px;top:4.2px;font-size:12.20px;color:#f00;">21.11.25</div></div>
<div class="a" style="left:350px;top:665px;width:64px;height:21px;overflow:hidden"><div class="t" style="left:3.0px;top:4.2px;font-size:12.20px;color:#000;">05.12.25</div></div>
<div class="a" style="left:415px;top:665px;width:139px;height:21px;overflow:hidden"><div class="t" style="left:3.0px;top:4.3px;font-size:12.05px;color:#000;text-decoration:underline;">Z-21435000-L-Z64</div></div>
<div class="a" style="left:555px;top:665px;width:209px;height:21px;overflow:hidden"><div class="t" style="left:3.0px;top:4.1px;font-size:12.30px;color:#000;">*Zahnrad*</div></div>
<div class="a" style="left:765px;top:665px;width:121px;height:21px;overflow:hidden"><div class="t" style="left:3.0px;top:5.3px;font-size:10.90px;color:#000;">Ø53 mm, 64 Zähne, 2...</div></div>
<div class="a" style="left:901px;top:668px;width:13px;height:13px;background:#fff;border:1.4px solid #333"></div>
<div class="a" style="left:958px;top:668px;width:13px;height:13px;background:#fff;border:1.4px solid #333"></div>
<div class="a" style="left:1001px;top:665px;width:79px;height:21px;overflow:hidden"><div class="t" style="right:1.5px;top:4.2px;font-size:12.20px;color:#000;">396,00</div></div>
<div class="a" style="left:1081px;top:665px;width:49px;height:21px;overflow:hidden"><div class="t" style="left:3.0px;top:4.2px;font-size:12.20px;color:#000;">Stk</div></div>
<div class="a" style="left:1131px;top:665px;width:74px;height:21px;overflow:hidden"><div class="t" style="right:1.5px;top:4.2px;font-size:12.20px;color:#000;">50,000</div></div>
<div class="a" style="left:1206px;top:665px;width:74px;height:21px;overflow:hidden"><div class="t" style="right:1.5px;top:4.2px;font-size:12.20px;color:#000;">-1.140,00</div></div>
<div class="a" style="left:1355px;top:665px;width:55px;height:21px;overflow:hidden"><div class="t" style="left:3.0px;top:5.9px;font-size:10.20px;color:#000;">KT1001</div></div>
<div class="a" style="left:1428px;top:668px;width:13px;height:13px;background:#fff;border:1.4px solid #333"></div>
<svg style="left:1477px;top:668px" width="17" height="14"><path d="M0.5 0.5 H12 L15.5 4 V13.5 H0.5 Z" fill="#fafafa" stroke="#d4d4d4"/><path d="M12 0.5 V4 H15.5" fill="#e4e4e4" stroke="#d4d4d4"/><text x="7.5" y="10.5" font-size="10" font-style="italic" fill="#9a9a9a" text-anchor="middle" font-family="Liberation Sans">a</text></svg>
<div class="a" style="left:1512px;top:665px;width:125px;height:21px;overflow:hidden"><div class="t" style="left:3.0px;top:4.2px;font-size:12.20px;color:#000;text-decoration:underline;">STAHL</div></div>
<div class="a" style="left:1955px;top:665px;width:105px;height:21px;overflow:hidden"><div class="t" style="right:1.5px;top:4.2px;font-size:12.20px;color:#000;">1,00</div></div>
<div class="a" style="left:2096px;top:668px;width:13px;height:13px;background:#fff;border:1.4px solid #333"></div>
<div class="a" style="left:2143px;top:665px;width:79px;height:21px;overflow:hidden"><div class="t" style="left:4.0px;top:6.7px;font-size:9.20px;color:#555;">BE25-00151;FBE2</div></div>
<div class="a" style="left:2283px;top:665px;width:72px;height:21px;overflow:hidden"><div class="t" style="left:3.0px;top:6.4px;font-size:9.60px;color:#555;">ANFL25-00119</div></div>
<div class="a" style="left:57px;top:705px;width:33px;height:21px;background:#efefef"></div>
<div class="a" style="left:90px;top:705px;width:39px;height:21px;background:#efefef"></div>
<div class="a" style="left:129px;top:705px;width:46px;height:21px;background:#efefef"></div>
<div class="a" style="left:175px;top:705px;width:110px;height:21px;background:#ffff88"></div>
<div class="a" style="left:285px;top:705px;width:65px;height:21px;background:#efefef"></div>
<div class="a" style="left:350px;top:705px;width:65px;height:21px;background:#efefef"></div>
<div class="a" style="left:415px;top:705px;width:140px;height:21px;background:#efefef"></div>
<div class="a" style="left:555px;top:705px;width:210px;height:21px;background:#efefef"></div>
<div class="a" style="left:765px;top:705px;width:122px;height:21px;background:#fffee4"></div>
<div class="a" style="left:887px;top:705px;width:40px;height:21px;background:#fffee4"></div>
<div class="a" style="left:927px;top:705px;width:74px;height:21px;background:#fffee4"></div>
<div class="a" style="left:1001px;top:705px;width:80px;height:21px;background:#efefef"></div>
<div class="a" style="left:1081px;top:705px;width:50px;height:21px;background:#fffee4"></div>
<div class="a" style="left:1131px;top:705px;width:75px;height:21px;background:#fffee4"></div>
<div class="a" style="left:1206px;top:705px;width:75px;height:21px;background:#fffee4"></div>
<div class="a" style="left:1281px;top:705px;width:74px;height:21px;background:#fffee4"></div>
<div class="a" style="left:1355px;top:705px;width:56px;height:21px;background:#fffee4"></div>
<div class="a" style="left:1411px;top:705px;width:46px;height:21px;background:#efefef"></div>
<div class="a" style="left:1457px;top:705px;width:55px;height:21px;background:#c2e59c"></div>
<div class="a" style="left:1512px;top:705px;width:126px;height:21px;background:#efefef"></div>
<div class="a" style="left:1638px;top:705px;width:112px;height:21px;background:#fffee4"></div>
<div class="a" style="left:1750px;top:705px;width:28px;height:21px;background:#fffee4"></div>
<div class="a" style="left:1778px;top:705px;width:177px;height:21px;background:#fffee4"></div>
<div class="a" style="left:1955px;top:705px;width:106px;height:21px;background:#efefef"></div>
<div class="a" style="left:2061px;top:705px;width:82px;height:21px;background:#fffee4"></div>
<div class="a" style="left:2143px;top:705px;width:80px;height:21px;background:#fffee4"></div>
<div class="a" style="left:2223px;top:705px;width:60px;height:21px;background:#fffee4"></div>
<div class="a" style="left:2283px;top:705px;width:73px;height:21px;background:#fffee4"></div>
<div class="a" style="left:57px;top:725px;width:2299px;height:1px;background:#dcdcdc"></div>
<div class="a" style="left:129px;top:705px;width:1px;height:21px;background:#dcdcdc"></div>
<div class="a" style="left:175px;top:705px;width:1px;height:21px;background:#dcdcdc"></div>
<div class="a" style="left:285px;top:705px;width:1px;height:21px;background:#dcdcdc"></div>
<div class="a" style="left:350px;top:705px;width:1px;height:21px;background:#dcdcdc"></div>
<div class="a" style="left:415px;top:705px;width:1px;height:21px;background:#dcdcdc"></div>
<div class="a" style="left:555px;top:705px;width:1px;height:21px;background:#dcdcdc"></div>
<div class="a" style="left:765px;top:705px;width:1px;height:21px;background:#dcdcdc"></div>
<div class="a" style="left:887px;top:705px;width:1px;height:21px;background:#dcdcdc"></div>
<div class="a" style="left:927px;top:705px;width:1px;height:21px;background:#dcdcdc"></div>
<div class="a" style="left:1001px;top:705px;width:1px;height:21px;background:#dcdcdc"></div>
<div class="a" style="left:1081px;top:705px;width:1px;height:21px;background:#dcdcdc"></div>
<div class="a" style="left:1131px;top:705px;width:1px;height:21px;background:#dcdcdc"></div>
<div class="a" style="left:1206px;top:705px;width:1px;height:21px;background:#dcdcdc"></div>
<div class="a" style="left:1281px;top:705px;width:1px;height:21px;background:#dcdcdc"></div>
<div class="a" style="left:1355px;top:705px;width:1px;height:21px;background:#dcdcdc"></div>
<div class="a" style="left:1411px;top:705px;width:1px;height:21px;background:#dcdcdc"></div>
<div class="a" style="left:1457px;top:705px;width:1px;height:21px;background:#dcdcdc"></div>
<div class="a" style="left:1512px;top:705px;width:1px;height:21px;background:#dcdcdc"></div>
<div class="a" style="left:1638px;top:705px;width:1px;height:21px;background:#dcdcdc"></div>
<div class="a" style="left:1750px;top:705px;width:1px;height:21px;background:#dcdcdc"></div>
<div class="a" style="left:1778px;top:705px;width:1px;height:21px;background:#dcdcdc"></div>
<div class="a" style="left:1955px;top:705px;width:1px;height:21px;background:#dcdcdc"></div>
<div class="a" style="left:2061px;top:705px;width:1px;height:21px;background:#dcdcdc"></div>
<div class="a" style="left:2143px;top:705px;width:1px;height:21px;background:#dcdcdc"></div>
<div class="a" style="left:2223px;top:705px;width:1px;height:21px;background:#dcdcdc"></div>
<div class="a" style="left:2283px;top:705px;width:1px;height:21px;background:#dcdcdc"></div>
<div class="a" style="left:57px;top:705px;width:1px;height:21px;background:#dcdcdc"></div>
<svg style="left:60px;top:711px" width="10" height="10"><rect x="0.5" y="0.5" width="8.5" height="8.5" rx="1" fill="#f4f4f4" stroke="#888"/><path d="M2.5 4.75 H7 M4.75 2.5 V7" stroke="#2a3a9a" stroke-width="1"/></svg>
<div class="a" style="left:90px;top:705px;width:38px;height:21px;overflow:hidden"><div class="t" style="right:1.5px;top:4.2px;font-size:12.20px;color:#000;">170</div></div>
<div class="a" style="left:146px;top:708px;width:13px;height:13px;background:#fff;border:1.4px solid #333"></div>
<div class="a" style="left:175px;top:705px;width:109px;height:21px;overflow:hidden"><div class="t" style="left:3.0px;top:5.3px;font-size:10.85px;color:#000;">BANF 2025-09-03.0...</div></div>
<div class="a" style="left:285px;top:705px;width:64px;height:21px;overflow:hidden"><div class="t" style="left:3.0px;top:4.2px;font-size:12.20px;color:#f00;">05.09.25</div></div>
<div class="a" style="left:350px;top:705px;width:64px;height:21px;overflow:hidden"><div class="t" style="left:3.0px;top:4.2px;font-size:12.20px;color:#000;">03.10.25</div></div>
<div class="a" style="left:415px;top:705px;width:139px;height:21px;overflow:hidden"><div class="t" style="left:3.0px;top:4.3px;font-size:12.05px;color:#000;text-decoration:underline;">1.2210 Ø14X1000</div></div>
<div class="a" style="left:555px;top:705px;width:209px;height:21px;overflow:hidden"><div class="t" style="left:3.0px;top:4.1px;font-size:12.30px;color:#000;">*Silberstahl Rundstange / Welle DI...</div></div>
<div class="a" style="left:765px;top:705px;width:121px;height:21px;overflow:hidden"><div class="t" style="left:3.0px;top:5.3px;font-size:10.90px;color:#000;">Ø 14x1000</div></div>
<div class="a" style="left:901px;top:708px;width:13px;height:13px;background:#fff;border:1.4px solid #333"></div>
<div class="a" style="left:958px;top:708px;width:13px;height:13px;background:#fff;border:1.4px solid #333"></div>
<div class="a" style="left:1001px;top:705px;width:79px;height:21px;overflow:hidden"><div class="t" style="right:1.5px;top:4.2px;font-size:12.20px;color:#000;">81,00</div></div>
<div class="a" style="left:1081px;top:705px;width:49px;height:21px;overflow:hidden"><div class="t" style="left:3.0px;top:4.2px;font-size:12.20px;color:#000;">m</div></div>
<div class="a" style="left:1131px;top:705px;width:74px;height:21px;overflow:hidden"><div class="t" style="right:1.5px;top:4.2px;font-size:12.20px;color:#000;">344,000</div></div>
<div class="a" style="left:1206px;top:705px;width:74px;height:21px;overflow:hidden"><div class="t" style="right:1.5px;top:4.2px;font-size:12.20px;color:#000;">-2.835,89</div></div>
<div class="a" style="left:1355px;top:705px;width:55px;height:21px;overflow:hidden"><div class="t" style="left:3.0px;top:5.9px;font-size:10.20px;color:#000;">RM1001</div></div>
<div class="a" style="left:1428px;top:708px;width:13px;height:13px;background:#fff;border:1.4px solid #333"></div>
<svg style="left:1477px;top:708px" width="17" height="14"><path d="M0.5 0.5 H12 L15.5 4 V13.5 H0.5 Z" fill="#fafafa" stroke="#d4d4d4"/><path d="M12 0.5 V4 H15.5" fill="#e4e4e4" stroke="#d4d4d4"/><text x="7.5" y="10.5" font-size="10" font-style="italic" fill="#9a9a9a" text-anchor="middle" font-family="Liberation Sans">a</text></svg>
<div class="a" style="left:1512px;top:705px;width:125px;height:21px;overflow:hidden"><div class="t" style="left:3.0px;top:4.2px;font-size:12.20px;color:#000;text-decoration:underline;">STAHL</div></div>
<div class="a" style="left:1955px;top:705px;width:105px;height:21px;overflow:hidden"><div class="t" style="right:1.5px;top:4.2px;font-size:12.20px;color:#000;">1,00</div></div>
<div class="a" style="left:2096px;top:708px;width:13px;height:13px;background:#fff;border:1.4px solid #333"></div>
<div class="a" style="left:2143px;top:705px;width:79px;height:21px;overflow:hidden"><div class="t" style="left:4.0px;top:6.7px;font-size:9.20px;color:#555;">BE25-00160;BE25-00</div></div>
<div class="a" style="left:57px;top:496px;width:2299px;height:1px;background:#dcdcdc"></div>
<div class="a" style="left:57px;top:704px;width:2299px;height:1px;background:#dcdcdc"></div>
<div class="a" style="left:29px;top:726px;width:2327px;height:582px;background:#fff"></div>
<div class="a" style="left:72px;top:539px;width:18px;height:21px;background:#0078d7"></div>
<svg style="left:33px;top:544px" width="8" height="11"><path d="M1 1 L6 5.5 L1 10" fill="none" stroke="#000" stroke-width="1.2"/></svg>
<div class="a" style="left:72px;top:539px;width:2284px;height:1px;background:repeating-linear-gradient(90deg,#ff9a30 0 1px,#3a3a5a 1px 2px)"></div>
<div class="a" style="left:72px;top:558px;width:2284px;height:1px;background:repeating-linear-gradient(90deg,#ff9a30 0 1px,#3a3a5a 1px 2px)"></div>
<div class="a" style="left:538px;top:541px;width:15px;height:16px;background:#dedede;border:1px solid #aaa"></div>
<div class="t " style="left:541.0px;top:543.5px;font-size:10.00px;color:#222;">&middot;&middot;&middot;</div>
<div class="a" style="left:1114px;top:541px;width:15px;height:16px;background:#dedede;border:1px solid #aaa"></div>
<div class="t " style="left:1117.0px;top:543.5px;font-size:10.00px;color:#222;">&middot;&middot;&middot;</div>
<div class="a" style="left:1622px;top:541px;width:15px;height:16px;background:#dedede;border:1px solid #aaa"></div>
<div class="t " style="left:1625.0px;top:543.5px;font-size:10.00px;color:#222;">&middot;&middot;&middot;</div>
<div class="a" style="left:1493px;top:541px;width:17px;height:16px;background:#dcdcdc;border:1px solid #999"></div>
<svg style="left:1496px;top:545px" width="12" height="8"><path d="M1.5 1.5 L5.5 5.5 L9.5 1.5" fill="none" stroke="#333" stroke-width="1.2"/></svg>
<div class="a" style="left:1593px;top:548px;width:571px;height:388px;background:#f9f9f9;border:1px solid #a0a0a0;box-shadow:1px 1px 2px rgba(0,0,0,0.15)"></div>
<div class="a" style="left:1594px;top:549px;width:29px;height:386px;background:#f0f0f0"></div>
<div class="a" style="left:1623px;top:549px;width:1px;height:386px;background:#e2e2e2"></div>
<div class="a" style="left:1626px;top:619px;width:535px;height:1px;background:#d8d8d8"></div>
<div class="a" style="left:1626px;top:669px;width:535px;height:1px;background:#d8d8d8"></div>
<div class="a" style="left:1626px;top:719px;width:535px;height:1px;background:#d8d8d8"></div>
<div class="a" style="left:1626px;top:769px;width:535px;height:1px;background:#d8d8d8"></div>
<div class="a" style="left:1626px;top:819px;width:535px;height:1px;background:#d8d8d8"></div>
<div class="a" style="left:1596px;top:646px;width:565px;height:20px;border:1px solid #e5c365;border-radius:2px;background:linear-gradient(#fffbe8 0%,#fff2c0 30%,#ffd44a 55%,#fde07a 100%)"></div>
<svg style="left:1601px;top:552px" width="20" height="20"><defs><radialGradient id="wgr" cx="0.4" cy="0.35" r="0.7"><stop offset="0" stop-color="#ffb040"/><stop offset="1" stop-color="#d86000"/></radialGradient></defs><path d="M9 2 C5.5 2 2.5 8.5 2 12.5 C1.8 15 4 16 9 16 C14 16 16.2 15 16 12.5 C15.5 8.5 12.5 2 9 2 Z" fill="url(#wgr)" stroke="#8a4000" stroke-width="0.6"/><path d="M8 5 H10.2 L9.8 11 H8.4 Z" fill="#111"/><rect x="8.2" y="12" width="1.8" height="1.8" fill="#111"/></svg>
<div class="t " style="left:1627.2px;top:556.9px;font-size:11.90px;color:#1a1a1a;">Status: Bedarfstermin unmöglich =&gt; Produktion Termin verschieben (zuständig: AVOR)</div>
<svg style="left:1601px;top:574px" width="20" height="20"><defs><radialGradient id="wgr" cx="0.4" cy="0.35" r="0.7"><stop offset="0" stop-color="#ffb040"/><stop offset="1" stop-color="#d86000"/></radialGradient></defs><path d="M9 2 C5.5 2 2.5 8.5 2 12.5 C1.8 15 4 16 9 16 C14 16 16.2 15 16 12.5 C15.5 8.5 12.5 2 9 2 Z" fill="url(#wgr)" stroke="#8a4000" stroke-width="0.6"/><path d="M8 5 H10.2 L9.8 11 H8.4 Z" fill="#111"/><rect x="8.2" y="12" width="1.8" height="1.8" fill="#111"/></svg>
<div class="t " style="left:1627.2px;top:578.9px;font-size:11.90px;color:#1a1a1a;">Status: Artikel nicht zu beschaffen =&gt; in ABK austauschen mit Alternativartikel (zuständig: AVOR)</div>
<svg style="left:1601px;top:596px" width="20" height="20"><path d="M2.5 1.5 L7 6.5" stroke="#8a5418" stroke-width="2.6" stroke-linecap="round"/><path d="M6 6.5 L9.5 4.5 Q13 8 16 12.5 Q13 15.5 10 16 Q8 11 6 6.5 Z" fill="#ecd848" stroke="#a89020" stroke-width="0.6"/><path d="M6.2 6.7 L9.6 4.7" stroke="#d02020" stroke-width="1.1"/></svg>
<div class="t " style="left:1627.2px;top:600.9px;font-size:11.90px;color:#1a1a1a;">Status: entfernen</div>
<svg style="left:1601px;top:624px" width="20" height="20"><defs><radialGradient id="egr" cx="0.4" cy="0.35" r="0.75"><stop offset="0" stop-color="#ffe060"/><stop offset="1" stop-color="#c88a00"/></radialGradient></defs><circle cx="9" cy="9.5" r="7.2" fill="url(#egr)" stroke="#9a6a00" stroke-width="0.6"/><path d="M11.8 6.5 Q10.5 5.5 9.3 5.5 Q6 5.5 6 9.5 Q6 13.5 9.3 13.5 Q10.5 13.5 11.8 12.5" fill="none" stroke="#fff" stroke-width="1.7"/><path d="M4.8 8.6 H9.5 M4.8 10.6 H9" stroke="#fff" stroke-width="1"/></svg>
<div class="t " style="left:1627.2px;top:628.9px;font-size:11.90px;color:#1a1a1a;">Automatischer Preisvorschlag</div>
<svg style="left:1601px;top:646px" width="20" height="20"><defs><radialGradient id="egr" cx="0.4" cy="0.35" r="0.75"><stop offset="0" stop-color="#ffe060"/><stop offset="1" stop-color="#c88a00"/></radialGradient></defs><circle cx="9" cy="9.5" r="7.2" fill="url(#egr)" stroke="#9a6a00" stroke-width="0.6"/><path d="M11.8 6.5 Q10.5 5.5 9.3 5.5 Q6 5.5 6 9.5 Q6 13.5 9.3 13.5 Q10.5 13.5 11.8 12.5" fill="none" stroke="#fff" stroke-width="1.7"/><path d="M4.8 8.6 H9.5 M4.8 10.6 H9" stroke="#fff" stroke-width="1"/></svg>
<div class="t " style="left:1627.2px;top:650.9px;font-size:11.90px;color:#1a1a1a;">Preisübersicht</div>
<svg style="left:1601px;top:674px" width="20" height="20"><path d="M3 5 L13 3.5 L14 10.5 L5 12 Z" fill="#e8e8e8" stroke="#b0b0b0" stroke-width="0.8"/><path d="M12 3.5 Q13 1 15 2" fill="none" stroke="#b0b0b0" stroke-width="1.2"/><circle cx="5.5" cy="14.5" r="1.6" fill="#aaa"/><circle cx="11.5" cy="14" r="1.6" fill="#aaa"/><polygon points="12,9.5 14,9.5 14,11.5 16,11.5 16,13.5 14,13.5 14,15.5 12,15.5 12,13.5 10,13.5 10,11.5 12,11.5" fill="#f0f0f0" stroke="#999" stroke-width="0.7"/></svg>
<div class="t " style="left:1627.2px;top:678.9px;font-size:11.90px;color:#8a8a8a;">Bestellung auslösen [Lieferant angeben!]</div>
<svg style="left:2150px;top:680px" width="6" height="9"><path d="M0 0 L5 4 L0 8 Z" fill="#555"/></svg>
<svg style="left:1601px;top:696px" width="20" height="20"><path d="M3 5 L13 3.5 L14 10.5 L5 12 Z" fill="#c4c8f0" stroke="#7a7ea8" stroke-width="0.8"/><path d="M12 3.5 Q13 1 15 2" fill="none" stroke="#888" stroke-width="1.2"/><circle cx="5.5" cy="14.5" r="1.6" fill="#555"/><circle cx="11.5" cy="14" r="1.6" fill="#555"/><polygon points="12,9.5 14,9.5 14,11.5 16,11.5 16,13.5 14,13.5 14,15.5 12,15.5 12,13.5 10,13.5 10,11.5 12,11.5" fill="#3ccc3c" stroke="#0a700a" stroke-width="0.7"/></svg>
<div class="t " style="left:1627.2px;top:700.9px;font-size:11.90px;color:#1a1a1a;">Position anhängen</div>
<svg style="left:1601px;top:724px" width="20" height="20"><path d="M3 5.5 L13 3.5 L14 11 L5 12.5 Z" fill="#c4c8f0" stroke="#7a7ea8" stroke-width="0.8"/><path d="M12 3.5 Q13 1 15 2" fill="none" stroke="#888" stroke-width="1.2"/><path d="M4 13 L14 12" stroke="#888" stroke-width="1"/><circle cx="5.5" cy="15" r="1.6" fill="#555"/><circle cx="12" cy="14.5" r="1.6" fill="#555"/></svg>
<div class="t " style="left:1627.2px;top:728.9px;font-size:11.90px;color:#1a1a1a;">Neue Anfrage erstellen</div>
<svg style="left:1601px;top:746px" width="20" height="20"><path d="M3 5.5 L13 3.5 L14 11 L5 12.5 Z" fill="#c4c8f0" stroke="#7a7ea8" stroke-width="0.8"/><path d="M12 3.5 Q13 1 15 2" fill="none" stroke="#888" stroke-width="1.2"/><path d="M4 13 L14 12" stroke="#888" stroke-width="1"/><circle cx="5.5" cy="15" r="1.6" fill="#555"/><circle cx="12" cy="14.5" r="1.6" fill="#555"/></svg>
<div class="t " style="left:1627.2px;top:750.9px;font-size:11.90px;color:#1a1a1a;">An Anfrage anhängen</div>
<svg style="left:1601px;top:774px" width="20" height="20"><path d="M2.5 1.5 L7 6.5" stroke="#8a5418" stroke-width="2.6" stroke-linecap="round"/><path d="M6 6.5 L9.5 4.5 Q13 8 16 12.5 Q13 15.5 10 16 Q8 11 6 6.5 Z" fill="#ecd848" stroke="#a89020" stroke-width="0.6"/><path d="M6.2 6.7 L9.6 4.7" stroke="#d02020" stroke-width="1.1"/></svg>
<div class="t " style="left:1627.2px;top:778.9px;font-size:11.90px;color:#1a1a1a;">Lieferant entfernen</div>
<svg style="left:1601px;top:796px" width="20" height="20"><rect x="2" y="2.5" width="4" height="4" fill="#b0b0b0"/><rect x="8" y="8" width="4" height="4" fill="#a0a0a0"/><rect x="12.5" y="12.5" width="4" height="4" fill="#a0a0a0"/><path d="M4 6.5 V10 H8 M6 4.5 H11 V8 M10 12 V14.5 H12.5" fill="none" stroke="#999" stroke-width="0.9"/><path d="M9 3 L11 4.5 L9 6" fill="none" stroke="#999" stroke-width="0.8"/></svg>
<div class="t " style="left:1627.2px;top:800.9px;font-size:11.90px;color:#8a8a8a;">Markierte Zellen mit dem fokusierten Wert auffüllen</div>
<svg style="left:1601px;top:824px" width="20" height="20"><defs><linearGradient id="agr" x1="0" y1="0" x2="1" y2="1"><stop offset="0" stop-color="#4aa8ff"/><stop offset="1" stop-color="#0a5ac8"/></linearGradient></defs><path d="M5.5 4 L13.5 9 L5.5 14 Z" fill="url(#agr)" stroke="#0a50b0" stroke-width="0.5"/></svg>
<div class="t " style="left:1627.2px;top:828.9px;font-size:11.90px;color:#1a1a1a;">Anfrage-Nr. &nbsp;(ANFL25-00121)</div>
<svg style="left:1601px;top:846px" width="20" height="20"><defs><linearGradient id="agr" x1="0" y1="0" x2="1" y2="1"><stop offset="0" stop-color="#4aa8ff"/><stop offset="1" stop-color="#0a5ac8"/></linearGradient></defs><path d="M5.5 4 L13.5 9 L5.5 14 Z" fill="url(#agr)" stroke="#0a50b0" stroke-width="0.5"/></svg>
<div class="t " style="left:1627.2px;top:850.9px;font-size:11.90px;color:#1a1a1a;">Artikelverwaltung &nbsp;(1100017)</div>
<svg style="left:1601px;top:868px" width="20" height="20"><defs><linearGradient id="agr" x1="0" y1="0" x2="1" y2="1"><stop offset="0" stop-color="#4aa8ff"/><stop offset="1" stop-color="#0a5ac8"/></linearGradient></defs><path d="M5.5 4 L13.5 9 L5.5 14 Z" fill="url(#agr)" stroke="#0a50b0" stroke-width="0.5"/></svg>
<div class="t " style="left:1627.2px;top:872.9px;font-size:11.90px;color:#1a1a1a;">Bestellvorschläge &nbsp;(2500078)</div>
<svg style="left:1601px;top:890px" width="20" height="20"><defs><linearGradient id="agr" x1="0" y1="0" x2="1" y2="1"><stop offset="0" stop-color="#4aa8ff"/><stop offset="1" stop-color="#0a5ac8"/></linearGradient></defs><path d="M5.5 4 L13.5 9 L5.5 14 Z" fill="url(#agr)" stroke="#0a50b0" stroke-width="0.5"/></svg>
<div class="t " style="left:1627.2px;top:894.9px;font-size:11.90px;color:#1a1a1a;">Einkauf [neu anlegen / unvollständige Parameter]</div>
<svg style="left:1601px;top:912px" width="20" height="20"><path d="M2 4.5 H7 L8.5 6 H15 V14.5 H2 Z" fill="#e0a820" stroke="#8a6810" stroke-width="0.7"/><path d="M4.5 8.5 H17.5 L15 15 H2 Z" fill="#fcd868" stroke="#8a6810" stroke-width="0.7"/></svg>
<div class="t " style="left:1627.2px;top:916.9px;font-size:11.90px;color:#1a1a1a;">Unbenutzt</div>
<svg style="left:2150px;top:918px" width="6" height="9"><path d="M0 0 L5 4 L0 8 Z" fill="#555"/></svg>
<div class="a" style="left:29px;top:1308px;width:2327px;height:1px;background:#d0d0d0"></div>
<div class="a" style="left:29px;top:1309px;width:2327px;height:24px;background:#efefef"></div>
<div class="a" style="left:41px;top:1309px;width:1px;height:24px;background:#d4d4d4"></div>
<div class="a" style="left:44px;top:1311px;width:86px;height:21px;background:#e6e8e8;border:1px solid #d8d8d8"></div>
<div class="t" style="right:2233.0px;top:1315.7px;font-size:12.20px;">10</div>
<div class="a" style="left:1752px;top:1311px;width:26px;height:21px;background:#e6e8e8;border:1px solid #d8d8d8"></div>
<div class="a" style="left:1753px;top:1311px;width:24px;height:21px;overflow:hidden"><div class="t" style="right:1px;top:4.7px;font-size:12.2px">1.153,04</div></div>
<div class="a" style="left:29px;top:1333px;width:2327px;height:1px;background:#b8b8b8"></div>
<div class="a" style="left:29px;top:1334px;width:2327px;height:25px;background:#efefef"></div>
<div class="a" style="left:35px;top:1339px;width:15px;height:15px;background:#d04a4a"></div>
<svg style="left:35px;top:1339px" width="15" height="15"><path d="M5 5 L10 10 M10 5 L5 10" stroke="#fff" stroke-width="1.5"/></svg>
<div class="a" style="left:55px;top:1340px;width:13px;height:13px;background:#fff;border:1.4px solid #333"></div><svg style="left:55px;top:1340px" width="13" height="13"><path d="M2.5 6.5 L5.2 9.2 L10.5 3.3" fill="none" stroke="#222" stroke-width="1.3"/></svg>
<div class="t " style="left:77.0px;top:1340.6px;font-size:12.25px;">(Fertigungsartikel = Falsch)</div>
<div class="a" style="left:236px;top:1338px;width:17px;height:17px;background:#e4e4e4;border:1px solid #b4b4b4"></div>
<svg style="left:239px;top:1343px" width="12" height="8"><path d="M1.5 1.5 L5.5 5.5 L9.5 1.5" fill="none" stroke="#555" stroke-width="1.1"/></svg>
<div class="a" style="left:29px;top:1359px;width:2327px;height:17px;background:#f0f0f0"></div>
<div class="a" style="left:47px;top:1360px;width:2284px;height:15px;background:#cdcdcd"></div>
<svg style="left:34px;top:1362px" width="10" height="12"><path d="M7 2 L3 6 L7 10" fill="none" stroke="#555" stroke-width="1.6"/></svg>
<svg style="left:2343px;top:1362px" width="10" height="12"><path d="M3 2 L7 6 L3 10" fill="none" stroke="#555" stroke-width="1.6"/></svg>
<div class="a" style="left:28px;top:1376px;width:2331px;height:1px;background:#a0a0a0"></div>
<div class="a" style="left:2px;top:1320px;width:22px;height:21px;background:#e4e4ec;border:1px solid #c4c4d0"></div>
<div class="a" style="left:3px;top:1346px;width:20px;height:1px;background:#f4f4f4"></div>
<div class="a" style="left:2px;top:1353px;width:22px;height:21px;background:#e4e4ec;border:1px solid #c4c4d0"></div>
<div class="a" style="left:2px;top:1377px;width:22px;height:21px;background:#e4e4ec;border:1px solid #c4c4d0"></div>
<svg style="left:2px;top:1320px" width="24" height="80"><path d="M5 3 L17 2 L19 16 L7 18 Z" fill="#f0f0f4" stroke="#99a" stroke-width="0.8"/><path d="M13 12 H16 V9 H18 V12 H21 V14 H18 V17 H16 V14 H13 Z" fill="#22b022"/><rect x="7" y="36" width="11" height="14" fill="#fff" stroke="#667" stroke-width="0.8"/><path d="M9 39 H16 M9 41 H16 M9 43 H16 M9 45 H16" stroke="#4a7ad0" stroke-width="0.8"/><rect x="9" y="46" width="7" height="2" fill="#3a70c0"/><path d="M8 60 L15 60 L19 64 L19 71 L15 75 L8 75 L4 71 L4 64 Z" fill="#e8321e"/><ellipse cx="11" cy="63.5" rx="4" ry="2" fill="#ff9a80" opacity="0.7"/></svg>
<div class="a" style="left:-1px;top:897px;width:7px;height:190px;background:#0c5a96;border-radius:0 3px 3px 0;border:1px solid #0a1a28;box-shadow:1px 1px 2px rgba(0,0,0,0.3)"></div>
<svg style="left:0;top:985px" width="6" height="12"><path d="M0 2 H3 M0 5 H3 M0 8 H3" stroke="#fff" stroke-width="1"/></svg>
<div class="a" style="left:27px;top:1377px;width:2333px;height:23px;background:#efefef"></div>
<div class="a" style="left:27px;top:1379px;width:2333px;height:1px;background:#c8c8c8"></div>
<div class="a" style="left:27px;top:1382px;width:60px;height:18px;border-left:1px solid #b8b8b8;border-top:1px solid #b8b8b8"></div>
<div class="a" style="left:91px;top:1382px;width:176px;height:18px;border-left:1px solid #b8b8b8;border-top:1px solid #b8b8b8"></div>
<div class="a" style="left:270px;top:1382px;width:79px;height:18px;border-left:1px solid #b8b8b8;border-top:1px solid #b8b8b8"></div>
<div class="a" style="left:353px;top:1382px;width:176px;height:18px;border-left:1px solid #b8b8b8;border-top:1px solid #b8b8b8"></div>
<div class="a" style="left:532px;top:1382px;width:103px;height:18px;border-left:1px solid #b8b8b8;border-top:1px solid #b8b8b8"></div>
<div class="a" style="left:638px;top:1382px;width:85px;height:18px;border-left:1px solid #b8b8b8;border-top:1px solid #b8b8b8"></div>
<div class="a" style="left:727px;top:1382px;width:76px;height:18px;border-left:1px solid #b8b8b8;border-top:1px solid #b8b8b8"></div>
<div class="a" style="left:807px;top:1382px;width:95px;height:18px;border-left:1px solid #b8b8b8;border-top:1px solid #b8b8b8"></div>
<div class="a" style="left:905px;top:1382px;width:101px;height:18px;border-left:1px solid #b8b8b8;border-top:1px solid #b8b8b8"></div>
<div class="a" style="left:1009px;top:1382px;width:101px;height:18px;border-left:1px solid #b8b8b8;border-top:1px solid #b8b8b8"></div>
<div class="a" style="left:1113px;top:1382px;width:1247px;height:18px;border-left:1px solid #b8b8b8;border-top:1px solid #b8b8b8"></div>
<div class="t" style="right:2277.5px;top:1385.9px;font-size:10.80px;">Erstellt:</div>
<div class="t " style="left:93.5px;top:1385.2px;font-size:11.60px;">2025-11-26 &nbsp;Steffen Angrick</div>
<div class="t" style="right:2020.5px;top:1386.0px;font-size:11.20px;">Bearbeitet:</div>
<div class="t " style="left:355.5px;top:1385.2px;font-size:11.60px;">2025-11-26 &nbsp;Steffen Angrick</div>
<div class="t" style="right:1730.0px;top:1385.3px;font-size:11.50px;">Wiedervorlage:</div>
<div class="a" style="left:640px;top:1384px;width:83px;height:14px;border:1px solid #8a94a4;border-radius:2px;background:linear-gradient(#fdfdfe,#e8ecf2)"></div>
<div class="t" style="left:681.0px;top:1385.5px;width:0;font-size:10.00px;display:flex;justify-content:center;"><span>**</span></div>
<div class="a" style="left:676px;top:1397px;width:10px;height:1px;background:#000"></div>
<div class="t" style="left:765.8px;top:1386.1px;width:0;font-size:11.90px;display:flex;justify-content:center;color:#2020e0;"><span><span class="u">Dokument</span></span></div>
<div class="t" style="left:854.5px;top:1386.1px;width:0;font-size:11.90px;display:flex;justify-content:center;color:#2020e0;"><span><span class="u">Notizen</span></span></div>
<div class="t" style="left:956.0px;top:1386.1px;width:0;font-size:11.90px;display:flex;justify-content:center;color:#e81010;"><span><span class="u">Eigenschaften</span></span></div>
<div class="t" style="left:1060.0px;top:1386.1px;width:0;font-size:11.90px;display:flex;justify-content:center;color:#e81010;"><span><span class="u">Softlink</span></span></div>
<div class="a" style="left:0px;top:1400px;width:2360px;height:40px;background:#101010"></div>
<div class="a" style="left:114px;top:1400px;width:48px;height:40px;background:#333333"></div>
<div class="a" style="left:0px;top:1438px;width:11px;height:2px;background:#78b8f0"></div>
<div class="a" style="left:69px;top:1438px;width:40px;height:2px;background:#78b8f0"></div>
<div class="a" style="left:114px;top:1438px;width:48px;height:2px;background:#78b8f0"></div>
<div class="a" style="left:167px;top:1438px;width:40px;height:2px;background:#78b8f0"></div>
<svg style="left:0;top:1400px" width="220" height="40"><defs><radialGradient id="ffg" cx="0.55" cy="0.85" r="0.9"><stop offset="0" stop-color="#ff2a6a"/><stop offset="0.45" stop-color="#ff5a2a"/><stop offset="0.8" stop-color="#ff9a1a"/><stop offset="1" stop-color="#ffd030"/></radialGradient><radialGradient id="ffp" cx="0.3" cy="0.3" r="0.8"><stop offset="0" stop-color="#9a5aff"/><stop offset="1" stop-color="#5a20c0"/></radialGradient></defs><rect x="0" y="12" width="2" height="14" fill="#e8d070"/><path d="M30 18 Q30 11 35 9.5 Q33 12 34 13.5 Q37 9 42.5 6 Q41.5 9.5 45 11.5 Q51 16 50 22 Q49 30 40 30.5 Q31 30.5 29.5 22 Z" fill="url(#ffg)"/><circle cx="40" cy="20.5" r="5.2" fill="url(#ffp)"/><path d="M33 16 Q36 13.5 40 15 Q37 16 36.5 18 Z" fill="#ffb020"/><path d="M77.5 11 L91 8.5 L91 31.5 L77.5 29 Z" fill="#0a6ad0"/><rect x="89.5" y="14" width="10.5" height="11.5" fill="#fff"/><path d="M90 14.5 L95 19.5 L100 14.5" fill="none" stroke="#0a6ad0" stroke-width="1.3"/><rect x="91" y="14" width="9" height="11.5" fill="none" stroke="#0a6ad0" stroke-width="0.6"/><ellipse cx="84.2" cy="20" rx="2.8" ry="3.8" fill="none" stroke="#fff" stroke-width="1.8"/><rect x="126.3" y="10.5" width="23.3" height="18.9" rx="4" fill="#1a8ac8"/><path d="M130 10.8 Q126.3 10.8 126.3 14.5 V25.5 Q126.3 29.2 130 29.2 Z" fill="#0e6ea8"/><rect x="132.5" y="12.8" width="15.5" height="14" rx="1.3" fill="#fff"/><path d="M135.8 12.8 L141 12.8 Q142.5 17 145.7 20 Q142.5 23 141 26.8 L135.8 26.8 Q137.5 23 140.2 20 Q137.5 17 135.8 12.8 Z" fill="#1a8ac8"/><circle cx="187" cy="19.8" r="11" fill="#f4f4f4"/><rect x="179" y="15.5" width="7.5" height="2.6" rx="1.3" fill="#36c5f0"/><rect x="183.5" y="11.5" width="2.6" height="2.6" rx="1.3" fill="#36c5f0"/><rect x="188" y="12" width="2.6" height="7.5" rx="1.3" fill="#2eb67d"/><rect x="192" y="16.5" width="2.6" height="2.6" rx="1.3" fill="#2eb67d"/><rect x="187.5" y="21.5" width="7.5" height="2.6" rx="1.3" fill="#ecb22e"/><rect x="187.5" y="25.5" width="2.6" height="2.6" rx="1.3" fill="#ecb22e"/><rect x="183.5" y="20.5" width="2.6" height="7.5" rx="1.3" fill="#e01e5a"/><rect x="179.5" y="20.5" width="2.6" height="2.6" rx="1.3" fill="#e01e5a"/></svg>
<div class="a" style="left:2115px;top:1411px;width:1px;height:18px;background:#555"></div>
<div class="a" style="left:2118px;top:1411px;width:1px;height:18px;background:#555"></div>
<div class="t " style="left:2129.0px;top:1415.1px;font-size:11.90px;color:#e8e8e8;">Desktop</div>
<svg style="left:2178px;top:1405px" width="180" height="30"><path d="M2 3 L4.5 5.5 L2 8 M5.5 3 L8 5.5 L5.5 8" fill="none" stroke="#eee" stroke-width="1.1"/><path d="M21 19 L27 13 L33 19" fill="none" stroke="#eee" stroke-width="1.4"/><rect x="44" y="9" width="14" height="10" fill="none" stroke="#eee" stroke-width="1.1"/><path d="M51 19 V23 M47 23 H55 M45.5 9 V21" stroke="#eee" stroke-width="1.1"/><rect x="42.5" y="8.5" width="4" height="4" fill="#101010" stroke="#eee" stroke-width="0.9"/><path d="M140 7 H156 V19 H149 L145.5 22 V19 H140 Z" fill="#f0f0f0"/><path d="M143 10 H153 M143 13 H153 M143 16 H149" stroke="#101010" stroke-width="1.1"/><circle cx="153" cy="19" r="3" fill="#101010" stroke="#f0f0f0" stroke-width="1"/></svg>
<div class="t" style="left:2273.5px;top:1406.0px;width:0;font-size:11.60px;display:flex;justify-content:center;color:#e8e8e8;"><span>11:41</span></div>
<div class="t" style="left:2274.0px;top:1423.7px;width:0;font-size:11.50px;display:flex;justify-content:center;color:#e8e8e8;"><span>27.11.2025</span></div>
<div class="a" style="left:2355px;top:1400px;width:1px;height:40px;background:#555"></div>
</body></html>
